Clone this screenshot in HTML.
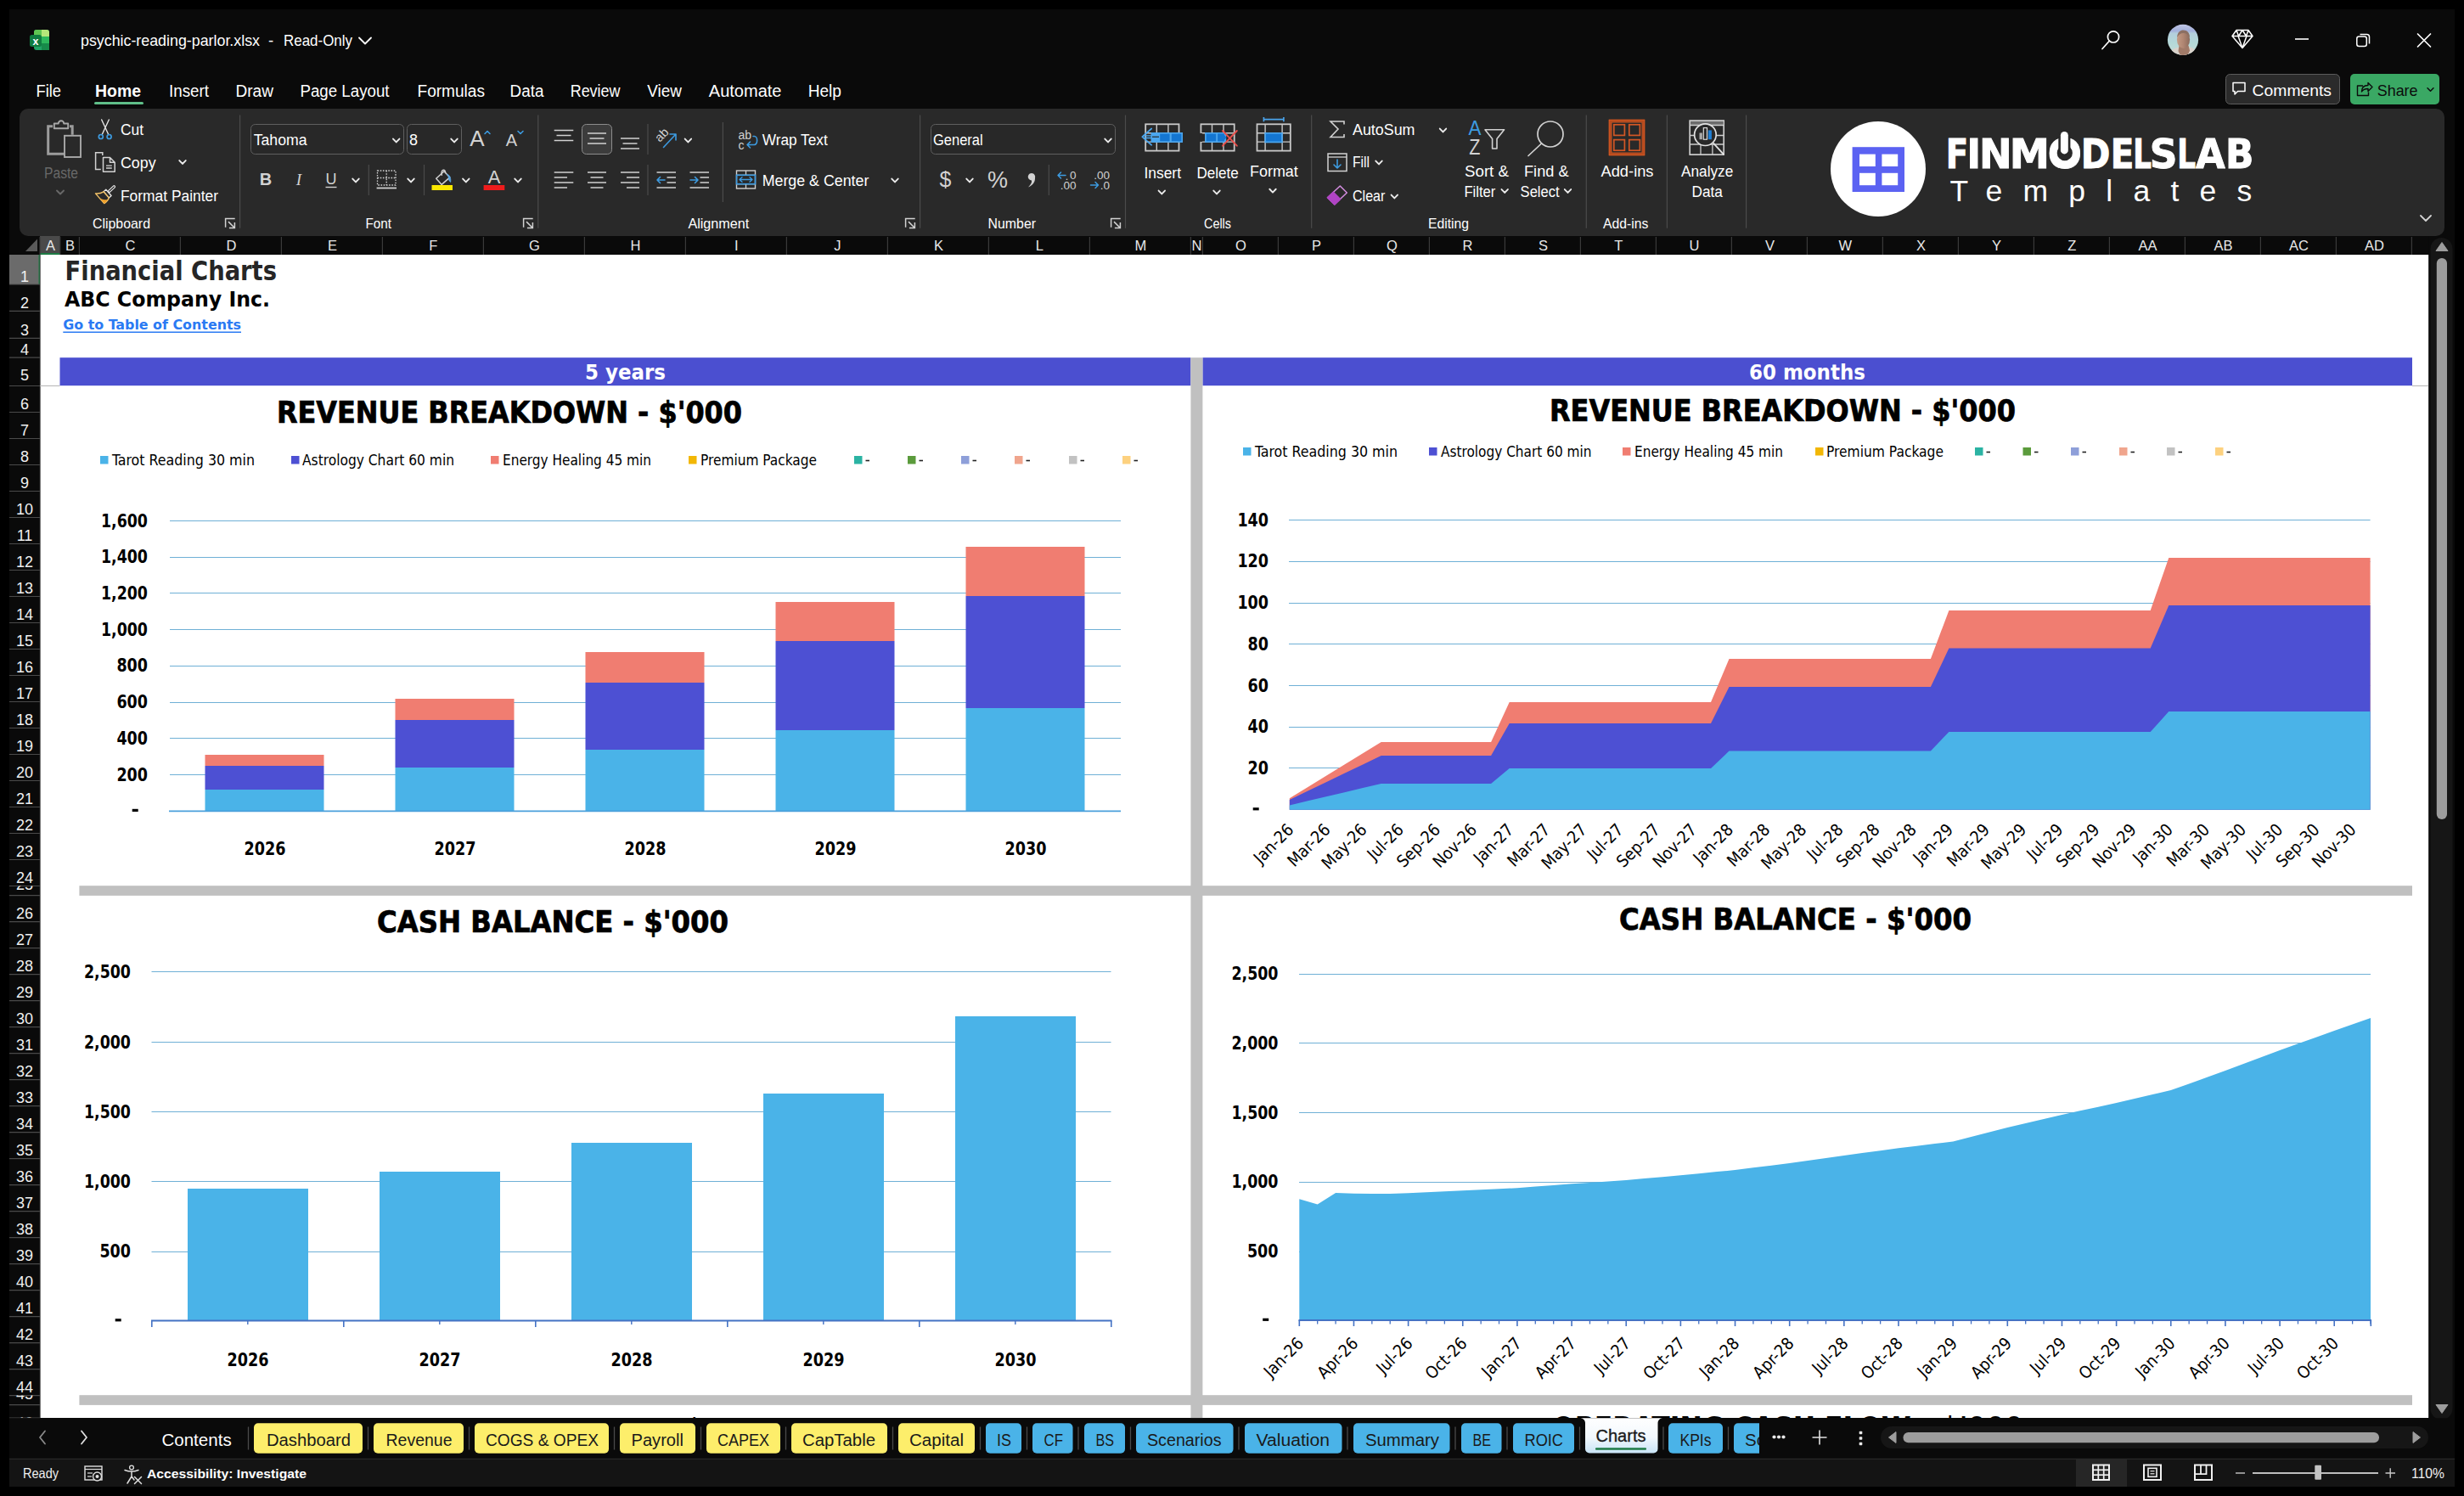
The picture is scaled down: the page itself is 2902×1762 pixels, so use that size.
<!DOCTYPE html>
<html lang="en"><head><meta charset="utf-8"><title>psychic-reading-parlor.xlsx - Excel</title>
<style>html,body{margin:0;padding:0;background:#000;}body{width:2902px;height:1762px;overflow:hidden;}svg text{white-space:pre;}</style>
</head><body>
<svg width="2902" height="1762" viewBox="0 0 2902 1762" style="display:block" role="img" aria-label="Excel workbook psychic-reading-parlor.xlsx - Financial Charts">
<rect x="0" y="0" width="2902" height="1762" fill="#000" />
<rect x="11" y="11" width="2880" height="1740" fill="#0a0a0a" />
<g>
<rect x="40" y="35" width="18" height="24" fill="#21a366" rx="3" />
<path d="M49 35 h6 a3 3 0 0 1 3 3 v5 h-9z" fill="#b5e67a" />
<path d="M40 38 a3 3 0 0 1 3 -3 h6 v8 h-9z" fill="#5fc552" />
<rect x="49" y="43" width="9" height="8" fill="#2eb85c" />
<rect x="49" y="51" width="9" height="8" fill="#178a4a" />
<rect x="35" y="41" width="14" height="14" fill="#107c41" rx="2.5" />
<text x="42" y="52.5" font-size="12.5" fill="#fff" font-family="'Liberation Sans', sans-serif" font-weight="bold" text-anchor="middle" >x</text>
</g>
<text x="95" y="54" font-size="18.5" fill="#ffffff" font-family="'Liberation Sans', sans-serif" textLength="211" lengthAdjust="spacingAndGlyphs" >psychic-reading-parlor.xlsx</text>
<text x="319" y="54" font-size="18.5" fill="#ffffff" font-family="'Liberation Sans', sans-serif" text-anchor="middle" >-</text>
<text x="334" y="54" font-size="18.5" fill="#ffffff" font-family="'Liberation Sans', sans-serif" textLength="81" lengthAdjust="spacingAndGlyphs" >Read-Only</text>
<path d="M423 44.5 L430 51.5 L437 44.5" fill="none" stroke="#fff" stroke-width="1.8" stroke-linecap="round" stroke-linejoin="round"/>
<circle cx="2489" cy="43.4" r="6.6" fill="none" stroke="#fff" stroke-width="1.7"/>
<line x1="2484.3" y1="48.3" x2="2476" y2="57.5" stroke="#fff" stroke-width="1.7" stroke-linecap="round"/>
<defs><clipPath id="av"><circle cx="2571" cy="46.900" r="18.100"/></clipPath><linearGradient id="avg" x1="0" y1="0" x2="0" y2="1"><stop offset="0" stop-color="#c3c8e6"/><stop offset="0.22" stop-color="#a4b1dc"/><stop offset="0.3" stop-color="#b3cfdc"/><stop offset="0.6" stop-color="#b4d9d8"/><stop offset="1" stop-color="#c9dcd8"/></linearGradient><linearGradient id="face" x1="0" y1="0" x2="1" y2="0"><stop offset="0" stop-color="#c39a85"/><stop offset="0.5" stop-color="#b08672"/><stop offset="1" stop-color="#8a6a5c"/></linearGradient></defs>
<g clip-path="url(#av)">
<rect x="2552" y="28" width="38" height="38" fill="url(#avg)" />
<path d="M2552 70 L2554.500 62 C2557.500 58.500 2562 56.500 2566 55.500 L2577 54.500 C2582 56 2586.500 58.500 2589 63 L2590 70 Z" fill="#d9d2cb" />
<path d="M2566.500 54 l-1 6 c1.500 4 3 5.500 5 6.500 l3 0 c2.500 -1.500 4.500 -3.500 5.500 -7 l-1.500 -6z" fill="#a17a68" />
<ellipse cx="2571.500" cy="46.500" rx="7.600" ry="10.600" fill="url(#face)"/>
<path d="M2564.200 44 c0 -6 3.500 -8.600 7.300 -8.600 c4.500 0 7.500 3 7.500 8.600 c-2 -3.500 -4.500 -5 -7.500 -5 c-3 0 -5.500 1.500 -7.300 5z" fill="#8c6f63" />
</g>
<path d="M2634 35.5 h14 l5 7 l-12 14 l-12 -14z M2629 42.5 h24 M2636 42.5 l5 14 l5 -14 M2634 35.5 l2.500 7 l4.5 -7 l4.5 7 l2.500 -7" fill="none" stroke="#fff" stroke-width="1.5" stroke-linejoin="round"/>
<line x1="2703" y1="46" x2="2719" y2="46" stroke="#fff" stroke-width="1.6" />
<rect x="2775.8" y="43" width="11.5" height="11.5" fill="none" rx="2.5" stroke="#fff" stroke-width="1.5" />
<path d="M2779.5 40.5 h8 a3 3 0 0 1 3 3 v8" fill="none" stroke="#fff" stroke-width="1.5" />
<path d="M2847.500 40 l15 15 M2862.500 40 l-15 15" fill="none" stroke="#fff" stroke-width="1.7" stroke-linecap="round"/>
<text x="42.5" y="114" font-size="19.5" fill="#ffffff" font-family="'Liberation Sans', sans-serif" textLength="29.5" lengthAdjust="spacingAndGlyphs" >File</text>
<text x="112" y="114" font-size="19.5" fill="#ffffff" font-family="'Liberation Sans', sans-serif" font-weight="bold" textLength="54" lengthAdjust="spacingAndGlyphs" >Home</text>
<text x="199" y="114" font-size="19.5" fill="#ffffff" font-family="'Liberation Sans', sans-serif" textLength="47" lengthAdjust="spacingAndGlyphs" >Insert</text>
<text x="277.5" y="114" font-size="19.5" fill="#ffffff" font-family="'Liberation Sans', sans-serif" textLength="44.5" lengthAdjust="spacingAndGlyphs" >Draw</text>
<text x="353.5" y="114" font-size="19.5" fill="#ffffff" font-family="'Liberation Sans', sans-serif" textLength="105" lengthAdjust="spacingAndGlyphs" >Page Layout</text>
<text x="491.5" y="114" font-size="19.5" fill="#ffffff" font-family="'Liberation Sans', sans-serif" textLength="79.5" lengthAdjust="spacingAndGlyphs" >Formulas</text>
<text x="600.6" y="114" font-size="19.5" fill="#ffffff" font-family="'Liberation Sans', sans-serif" textLength="39.8" lengthAdjust="spacingAndGlyphs" >Data</text>
<text x="671.7" y="114" font-size="19.5" fill="#ffffff" font-family="'Liberation Sans', sans-serif" textLength="58.8" lengthAdjust="spacingAndGlyphs" >Review</text>
<text x="762.2" y="114" font-size="19.5" fill="#ffffff" font-family="'Liberation Sans', sans-serif" textLength="40.6" lengthAdjust="spacingAndGlyphs" >View</text>
<text x="834.8" y="114" font-size="19.5" fill="#ffffff" font-family="'Liberation Sans', sans-serif" textLength="85.7" lengthAdjust="spacingAndGlyphs" >Automate</text>
<text x="951.7" y="114" font-size="19.5" fill="#ffffff" font-family="'Liberation Sans', sans-serif" textLength="39.3" lengthAdjust="spacingAndGlyphs" >Help</text>
<rect x="111" y="120" width="58" height="3" fill="#5fbe88" rx="1.5" />
<rect x="2621.5" y="87.5" width="134" height="35" fill="#2b2b2b" rx="5" stroke="#5c5c5c" stroke-width="1" />
<path d="M2630 97.500 h14 v10 h-8.500 l-3.500 3.500 v-3.500 h-2z" fill="none" stroke="#fff" stroke-width="1.5" stroke-linejoin="round"/>
<text x="2652.6" y="112.5" font-size="18.5" fill="#ffffff" font-family="'Liberation Sans', sans-serif" textLength="93.4" lengthAdjust="spacingAndGlyphs" >Comments</text>
<rect x="2768" y="87" width="105" height="36" fill="#3aa864" rx="5" />
<path d="M2783 101 h-6.500 v11.500 h13 v-4 M2781.500 108 c0 -5 3 -7.500 7.500 -7.500 v-3 l5 5 l-5 5 v-3 c-3.500 0 -6 1 -7.500 3.500z" fill="none" stroke="#0c0c0c" stroke-width="1.4" stroke-linejoin="round"/>
<text x="2799.7" y="112.5" font-size="18.5" fill="#0c0c0c" font-family="'Liberation Sans', sans-serif" textLength="47.9" lengthAdjust="spacingAndGlyphs" >Share</text>
<path d="M2859 103.75 L2862.5 107.25 L2866 103.75" fill="none" stroke="#0c0c0c" stroke-width="1.5" stroke-linecap="round" stroke-linejoin="round"/>
<rect x="23" y="128" width="2856" height="150" fill="#292929" rx="10" />
<path d="M62 148.700 h-5.300 v32.600 h19" fill="none" stroke="#9c9c9c" stroke-width="3" stroke-linejoin="miter"/>
<path d="M82 148.700 h3.200 v10" fill="none" stroke="#9c9c9c" stroke-width="3" />
<path d="M63.800 151.300 v-5.800 h5 a3.200 3.200 0 0 1 6.400 0 h5 v5.800z" fill="#292929" stroke="#a8a8a8" stroke-width="1.9" stroke-linejoin="round"/>
<rect x="76" y="159.8" width="19" height="25.2" fill="#292929" stroke="#a8a8a8" stroke-width="1.9" />
<text x="52" y="209.6" font-size="18" fill="#686868" font-family="'Liberation Sans', sans-serif" textLength="40" lengthAdjust="spacingAndGlyphs" >Paste</text>
<path d="M67 224.5 L71 228.5 L75 224.5" fill="none" stroke="#686868" stroke-width="1.9" stroke-linecap="round" stroke-linejoin="round"/>
<path d="M119.700 141 L127.800 158.500 M128.300 141 L120.200 158.500" fill="none" stroke="#e4e4e4" stroke-width="1.4" stroke-linecap="round"/>
<circle cx="118.800" cy="161" r="2.500" fill="none" stroke="#3d9be0" stroke-width="1.700"/><circle cx="128.600" cy="161" r="2.500" fill="none" stroke="#3d9be0" stroke-width="1.700"/>
<text x="142" y="159" font-size="18" fill="#fff" font-family="'Liberation Sans', sans-serif" textLength="27" lengthAdjust="spacingAndGlyphs" >Cut</text>
<path d="M120.800 183 v-3.200 h-8.200 v19.800 h6.200" fill="none" stroke="#d2d2d2" stroke-width="1.5" />
<path d="M121.500 185.500 h8 l5.700 5.700 v11 h-13.700z M129.500 185.500 v5.700 h5.700" fill="none" stroke="#d2d2d2" stroke-width="1.5" stroke-linejoin="round"/>
<path d="M125 195.200 h6.800 M125 198 h6.800" fill="none" stroke="#d2d2d2" stroke-width="1.3" />
<text x="142" y="198" font-size="18" fill="#fff" font-family="'Liberation Sans', sans-serif" textLength="41.6" lengthAdjust="spacingAndGlyphs" >Copy</text>
<path d="M211.3 189.05 L215 192.95 L218.7 189.05" fill="none" stroke="#ececec" stroke-width="1.9" stroke-linecap="round" stroke-linejoin="round"/>
<path d="M134.300 220 l-5.600 5.200" fill="none" stroke="#e8e8e8" stroke-width="3.6" stroke-linecap="round"/>
<path d="M134.300 220 l-5.600 5.200" fill="none" stroke="#292929" stroke-width="1.2" stroke-linecap="round"/>
<path d="M124.800 223.300 l6.300 7.200 l-2.800 2.500 l-6.300 -7.200z" fill="#292929" stroke="#e8e8e8" stroke-width="1.3" stroke-linejoin="round"/>
<path d="M122 225.800 l6.300 7.200 c-1 3 -3 5 -5.600 6.600 l-10.200 -11.700 c3.500 0.200 7 -0.500 9.500 -2.100z" fill="#292929" stroke="#f4c368" stroke-width="1.4" stroke-linejoin="round"/>
<path d="M117 232.900 c2.500 1.800 6 2.600 9.800 2.300 c-0.900 1.700 -2.300 3.100 -4.100 4.400z" fill="#f0a22c" />
<text x="142" y="236.9" font-size="18" fill="#fff" font-family="'Liberation Sans', sans-serif" textLength="115" lengthAdjust="spacingAndGlyphs" >Format Painter</text>
<text x="109" y="268.6" font-size="17" fill="#fff" font-family="'Liberation Sans', sans-serif" textLength="68" lengthAdjust="spacingAndGlyphs" >Clipboard</text>
<path d="M276.7 257.5 H265.6 V267.8" fill="none" stroke="#d2d2d2" stroke-width="1.5" />
<path d="M269 261.1 L276.2 268.3 M276.4 262.1 V268.6 H269.9" fill="none" stroke="#d2d2d2" stroke-width="1.5" />
<line x1="282.6" y1="135.6" x2="282.6" y2="268.8" stroke="#4b4b4b" stroke-width="1.2" />
<rect x="295.5" y="146.5" width="180" height="35" fill="#282828" rx="5" stroke="#5f5f5f" stroke-width="1" />
<text x="298.7" y="170.6" font-size="18" fill="#fff" font-family="'Liberation Sans', sans-serif" textLength="62.8" lengthAdjust="spacingAndGlyphs" >Tahoma</text>
<path d="M463 163.55 L466.7 167.45 L470.4 163.55" fill="none" stroke="#ececec" stroke-width="1.9" stroke-linecap="round" stroke-linejoin="round"/>
<rect x="479.5" y="146.5" width="64" height="35" fill="#282828" rx="5" stroke="#5f5f5f" stroke-width="1" />
<text x="482" y="170.6" font-size="18" fill="#fff" font-family="'Liberation Sans', sans-serif" >8</text>
<path d="M531.3 163.55 L535 167.45 L538.7 163.55" fill="none" stroke="#ececec" stroke-width="1.9" stroke-linecap="round" stroke-linejoin="round"/>
<text x="562" y="172" font-size="26" fill="#d2d2d2" font-family="'Liberation Sans', sans-serif" text-anchor="middle" >A</text>
<path d="M571 157.500 l3 -3 l3 3" fill="none" stroke="#3d9be0" stroke-width="1.6" stroke-linecap="round" stroke-linejoin="round"/>
<text x="602.5" y="171.8" font-size="20" fill="#d2d2d2" font-family="'Liberation Sans', sans-serif" text-anchor="middle" >A</text>
<path d="M610 154.500 l3 3 l3 -3" fill="none" stroke="#3d9be0" stroke-width="1.6" stroke-linecap="round" stroke-linejoin="round"/>
<text x="313" y="217.6" font-size="20" fill="#d2d2d2" font-family="'Liberation Sans', sans-serif" font-weight="bold" text-anchor="middle" >B</text>
<text x="352" y="217.6" font-size="19" fill="#d2d2d2" font-family="'Liberation Serif', serif" text-anchor="middle" style="font-style:italic" >I</text>
<text x="390" y="216.5" font-size="18" fill="#d2d2d2" font-family="'Liberation Sans', sans-serif" text-anchor="middle" >U</text>
<line x1="383.5" y1="220.5" x2="396.5" y2="220.5" stroke="#d2d2d2" stroke-width="1.4" />
<path d="M415.3 210.55 L419 214.45 L422.7 210.55" fill="none" stroke="#ececec" stroke-width="1.9" stroke-linecap="round" stroke-linejoin="round"/>
<line x1="434.3" y1="194" x2="434.3" y2="230" stroke="#4b4b4b" stroke-width="1.2" />
<rect x="444.500" y="201" width="21.500" height="17" fill="none" stroke="#d2d2d2" stroke-width="1.3" stroke-dasharray="1.600 1.600"/>
<line x1="455.2" y1="201" x2="455.2" y2="218" stroke="#d2d2d2" stroke-width="1.3" stroke-dasharray="1.600 1.600"/>
<line x1="444.5" y1="209.5" x2="466" y2="209.5" stroke="#d2d2d2" stroke-width="1.3" stroke-dasharray="1.600 1.600"/>
<line x1="443.6" y1="221.5" x2="467" y2="221.5" stroke="#d2d2d2" stroke-width="1.8" />
<path d="M480.3 210.55 L484 214.45 L487.7 210.55" fill="none" stroke="#ececec" stroke-width="1.9" stroke-linecap="round" stroke-linejoin="round"/>
<line x1="499.5" y1="194" x2="499.5" y2="230" stroke="#4b4b4b" stroke-width="1.2" />
<path d="M513.700 210.300 l9.300 -8.500 l6.800 7.100 l-9.600 8.500z" fill="none" stroke="#d2d2d2" stroke-width="1.5" stroke-linejoin="round"/>
<path d="M520.300 206.300 c-0.800 -3 0 -5.600 1.800 -6 c1.700 -0.300 2.600 1.200 2.500 3.300" fill="none" stroke="#d2d2d2" stroke-width="1.4" stroke-linecap="round"/>
<path d="M526.400 205.200 c3.200 0.800 4.800 4 4.300 9.300 c-1.600 -1.200 -2.300 -2.600 -2.300 -4.300 c0 -2 -0.600 -3.600 -2 -5z" fill="#5aa9e6" stroke="#5aa9e6" stroke-width="0.8" />
<rect x="508.5" y="218" width="24.5" height="6" fill="#fbe800" />
<path d="M545.1 210.55 L548.8 214.45 L552.5 210.55" fill="none" stroke="#ececec" stroke-width="1.9" stroke-linecap="round" stroke-linejoin="round"/>
<text x="582" y="215.5" font-size="22" fill="#d2d2d2" font-family="'Liberation Sans', sans-serif" text-anchor="middle" >A</text>
<rect x="569.6" y="218" width="24.7" height="6" fill="#ee1c1c" />
<path d="M606.3 210.55 L610 214.45 L613.7 210.55" fill="none" stroke="#ececec" stroke-width="1.9" stroke-linecap="round" stroke-linejoin="round"/>
<text x="430.4" y="268.6" font-size="17" fill="#fff" font-family="'Liberation Sans', sans-serif" textLength="30.6" lengthAdjust="spacingAndGlyphs" >Font</text>
<path d="M627.7 257.5 H616.6 V267.8" fill="none" stroke="#d2d2d2" stroke-width="1.5" />
<path d="M620 261.1 L627.2 268.3 M627.4 262.1 V268.6 H620.9" fill="none" stroke="#d2d2d2" stroke-width="1.5" />
<line x1="633.8" y1="135.6" x2="633.8" y2="268.8" stroke="#4b4b4b" stroke-width="1.2" />
<line x1="652.7" y1="153.5" x2="675.3" y2="153.5" stroke="#d2d2d2" stroke-width="1.5" />
<line x1="652.7" y1="165.5" x2="675.3" y2="165.5" stroke="#d2d2d2" stroke-width="1.5" />
<line x1="655.5" y1="159.5" x2="672.5" y2="159.5" stroke="#d2d2d2" stroke-width="1.5" />
<rect x="685.5" y="146.5" width="35" height="35" fill="#3c3c3c" rx="5" stroke="#8c8c8c" stroke-width="1" />
<line x1="692" y1="157" x2="714" y2="157" stroke="#d2d2d2" stroke-width="1.5" />
<line x1="692" y1="169" x2="714" y2="169" stroke="#d2d2d2" stroke-width="1.5" />
<line x1="694.5" y1="163" x2="711.5" y2="163" stroke="#d2d2d2" stroke-width="1.5" />
<line x1="731" y1="163" x2="753" y2="163" stroke="#d2d2d2" stroke-width="1.5" />
<line x1="731" y1="175" x2="753" y2="175" stroke="#d2d2d2" stroke-width="1.5" />
<line x1="733.5" y1="169" x2="750.5" y2="169" stroke="#d2d2d2" stroke-width="1.5" />
<line x1="763" y1="146" x2="763" y2="182" stroke="#4b4b4b" stroke-width="1.2" />
<text x="0" y="0" font-size="14.500" fill="#d2d2d2" font-family="'Liberation Sans', sans-serif" transform="translate(777,168) rotate(-45)">ab</text>
<path d="M781.500 173.500 L795.500 158.500 M789 158 h7 v7" fill="none" stroke="#3d9be0" stroke-width="1.6" stroke-linecap="round" stroke-linejoin="round"/>
<path d="M806.7 163.55 L810.4 167.45 L814.1 163.55" fill="none" stroke="#ececec" stroke-width="1.9" stroke-linecap="round" stroke-linejoin="round"/>
<line x1="652.7" y1="203" x2="675.3" y2="203" stroke="#d2d2d2" stroke-width="1.5" />
<line x1="652.7" y1="215" x2="675.3" y2="215" stroke="#d2d2d2" stroke-width="1.5" />
<line x1="652.7" y1="209" x2="668" y2="209" stroke="#d2d2d2" stroke-width="1.5" />
<line x1="652.7" y1="221" x2="668" y2="221" stroke="#d2d2d2" stroke-width="1.5" />
<line x1="692" y1="203" x2="714" y2="203" stroke="#d2d2d2" stroke-width="1.5" />
<line x1="692" y1="215" x2="714" y2="215" stroke="#d2d2d2" stroke-width="1.5" />
<line x1="695.5" y1="209" x2="710.5" y2="209" stroke="#d2d2d2" stroke-width="1.5" />
<line x1="695.5" y1="221" x2="710.5" y2="221" stroke="#d2d2d2" stroke-width="1.5" />
<line x1="731" y1="203" x2="753" y2="203" stroke="#d2d2d2" stroke-width="1.5" />
<line x1="731" y1="215" x2="753" y2="215" stroke="#d2d2d2" stroke-width="1.5" />
<line x1="738" y1="209" x2="753" y2="209" stroke="#d2d2d2" stroke-width="1.5" />
<line x1="738" y1="221" x2="753" y2="221" stroke="#d2d2d2" stroke-width="1.5" />
<line x1="763" y1="194" x2="763" y2="230" stroke="#4b4b4b" stroke-width="1.2" />
<line x1="773.5" y1="203" x2="796" y2="203" stroke="#d2d2d2" stroke-width="1.5" />
<line x1="773.5" y1="221" x2="796" y2="221" stroke="#d2d2d2" stroke-width="1.5" />
<line x1="785.5" y1="209" x2="796" y2="209" stroke="#d2d2d2" stroke-width="1.5" />
<line x1="785.5" y1="215" x2="796" y2="215" stroke="#d2d2d2" stroke-width="1.5" />
<path d="M783 212 h-9 M777.500 208.500 l-3.500 3.500 l3.500 3.500" fill="none" stroke="#3d9be0" stroke-width="1.6" stroke-linecap="round" stroke-linejoin="round"/>
<line x1="812.5" y1="203" x2="835" y2="203" stroke="#d2d2d2" stroke-width="1.5" />
<line x1="812.5" y1="221" x2="835" y2="221" stroke="#d2d2d2" stroke-width="1.5" />
<line x1="824.5" y1="209" x2="835" y2="209" stroke="#d2d2d2" stroke-width="1.5" />
<line x1="824.5" y1="215" x2="835" y2="215" stroke="#d2d2d2" stroke-width="1.5" />
<path d="M813 212 h9 M818.500 208.500 l3.500 3.500 l-3.500 3.500" fill="none" stroke="#3d9be0" stroke-width="1.6" stroke-linecap="round" stroke-linejoin="round"/>
<line x1="851.4" y1="144" x2="851.4" y2="238" stroke="#4b4b4b" stroke-width="1.2" />
<text x="869.5" y="164" font-size="14" fill="#d2d2d2" font-family="'Liberation Sans', sans-serif" >ab</text>
<text x="869.5" y="176" font-size="14" fill="#d2d2d2" font-family="'Liberation Sans', sans-serif" >c</text>
<path d="M887 160.500 h1.500 a2.500 4 0 0 1 0 10 h-8.500 M883.500 167 l-3.500 3.500 l3.500 3.500" fill="none" stroke="#3d9be0" stroke-width="1.6" stroke-linecap="round" stroke-linejoin="round"/>
<text x="897.7" y="170.6" font-size="18" fill="#fff" font-family="'Liberation Sans', sans-serif" textLength="77.1" lengthAdjust="spacingAndGlyphs" >Wrap Text</text>
<rect x="867.5" y="201" width="22" height="21" fill="none" stroke="#d2d2d2" stroke-width="1.4" />
<line x1="867.5" y1="206.3" x2="889.5" y2="206.3" stroke="#d2d2d2" stroke-width="1.3" />
<line x1="867.5" y1="216.7" x2="889.5" y2="216.7" stroke="#d2d2d2" stroke-width="1.3" />
<line x1="878.5" y1="201" x2="878.5" y2="206.3" stroke="#d2d2d2" stroke-width="1.3" />
<line x1="878.5" y1="216.7" x2="878.5" y2="222" stroke="#d2d2d2" stroke-width="1.3" />
<rect x="867.5" y="206.3" width="22" height="10.4" fill="none" stroke="#3d9be0" stroke-width="1.6" />
<path d="M871 211.500 h15 M874 208.800 l-3 2.700 l3 2.700 M883 208.800 l3 2.700 l-3 2.700" fill="none" stroke="#3d9be0" stroke-width="1.4" stroke-linecap="round" stroke-linejoin="round"/>
<text x="897.7" y="218.7" font-size="18" fill="#fff" font-family="'Liberation Sans', sans-serif" textLength="125.7" lengthAdjust="spacingAndGlyphs" >Merge &amp; Center</text>
<path d="M1050.3 210.55 L1054 214.45 L1057.7 210.55" fill="none" stroke="#ececec" stroke-width="1.9" stroke-linecap="round" stroke-linejoin="round"/>
<text x="810.4" y="268.6" font-size="17" fill="#fff" font-family="'Liberation Sans', sans-serif" textLength="71.9" lengthAdjust="spacingAndGlyphs" >Alignment</text>
<path d="M1077.7 257.5 H1066.6 V267.8" fill="none" stroke="#d2d2d2" stroke-width="1.5" />
<path d="M1070 261.1 L1077.2 268.3 M1077.4 262.1 V268.6 H1070.9" fill="none" stroke="#d2d2d2" stroke-width="1.5" />
<line x1="1083.6" y1="135.6" x2="1083.6" y2="268.8" stroke="#4b4b4b" stroke-width="1.2" />
<rect x="1096.5" y="146.5" width="217" height="35" fill="#282828" rx="5" stroke="#5f5f5f" stroke-width="1" />
<text x="1099" y="170.6" font-size="18" fill="#fff" font-family="'Liberation Sans', sans-serif" textLength="58.7" lengthAdjust="spacingAndGlyphs" >General</text>
<path d="M1301.3 163.55 L1305 167.45 L1308.7 163.55" fill="none" stroke="#ececec" stroke-width="1.9" stroke-linecap="round" stroke-linejoin="round"/>
<text x="1113.5" y="220" font-size="25" fill="#d2d2d2" font-family="'Liberation Sans', sans-serif" text-anchor="middle" >$</text>
<path d="M1138.3 210.55 L1142 214.45 L1145.7 210.55" fill="none" stroke="#ececec" stroke-width="1.9" stroke-linecap="round" stroke-linejoin="round"/>
<text x="1175" y="220.5" font-size="27" fill="#d2d2d2" font-family="'Liberation Sans', sans-serif" text-anchor="middle" >%</text>
<path d="M1215 204 a4.200 4.200 0 1 1 -0.100 0z M1219 208 c0.500 6 -2 10 -8 12.500 c3 -3 4.500 -5.500 4 -8z" fill="#d2d2d2" />
<line x1="1235.3" y1="194" x2="1235.3" y2="230" stroke="#4b4b4b" stroke-width="1.2" />
<path d="M1255 206.500 h-9 M1249.500 203 l-3.500 3.500 l3.500 3.500" fill="none" stroke="#3d9be0" stroke-width="1.5" stroke-linecap="round" stroke-linejoin="round"/>
<text x="1267.5" y="211" font-size="13.5" fill="#d2d2d2" font-family="'Liberation Sans', sans-serif" text-anchor="end" >0</text>
<text x="1267.5" y="222.5" font-size="13.5" fill="#d2d2d2" font-family="'Liberation Sans', sans-serif" text-anchor="end" >.00</text>
<text x="1256.5" y="211.5" font-size="12.5" fill="#d2d2d2" font-family="'Liberation Sans', sans-serif" text-anchor="middle" >.</text>
<text x="1307" y="211" font-size="13.5" fill="#d2d2d2" font-family="'Liberation Sans', sans-serif" text-anchor="end" >.00</text>
<text x="1307" y="222.5" font-size="13.5" fill="#d2d2d2" font-family="'Liberation Sans', sans-serif" text-anchor="end" >.0</text>
<path d="M1284.500 218 h9 M1290 214.500 l3.500 3.500 l-3.500 3.500" fill="none" stroke="#3d9be0" stroke-width="1.5" stroke-linecap="round" stroke-linejoin="round"/>
<text x="1163.6" y="268.6" font-size="17" fill="#fff" font-family="'Liberation Sans', sans-serif" textLength="56.4" lengthAdjust="spacingAndGlyphs" >Number</text>
<path d="M1319.7 257.5 H1308.6 V267.8" fill="none" stroke="#d2d2d2" stroke-width="1.5" />
<path d="M1312 261.1 L1319.2 268.3 M1319.4 262.1 V268.6 H1312.9" fill="none" stroke="#d2d2d2" stroke-width="1.5" />
<line x1="1325.5" y1="135.6" x2="1325.5" y2="268.8" stroke="#4b4b4b" stroke-width="1.2" />
<rect x="1349.2" y="146.3" width="39.3" height="31.3" fill="none" stroke="#c9c9c9" stroke-width="1.8" />
<line x1="1362.3" y1="146.3" x2="1362.3" y2="177.6" stroke="#c9c9c9" stroke-width="1.4" />
<line x1="1375.9" y1="146.3" x2="1375.9" y2="177.6" stroke="#c9c9c9" stroke-width="1.4" />
<line x1="1349.2" y1="156.733" x2="1388.5" y2="156.733" stroke="#c9c9c9" stroke-width="1.4" />
<line x1="1349.2" y1="167.167" x2="1388.5" y2="167.167" stroke="#c9c9c9" stroke-width="1.4" />
<rect x="1355.5" y="156" width="37.5" height="11.9" fill="#4ba6ee" />
<rect x="1366.2" y="157.6" width="11.4" height="8.7" fill="#1476d2" />
<rect x="1379.8" y="157.6" width="11.6" height="8.7" fill="#1476d2" />
<path d="M1356.200 151.500 L1345.300 161.200 L1356.200 170.800" fill="none" stroke="#4ba6ee" stroke-width="1.7" stroke-linecap="round" stroke-linejoin="round"/>
<path d="M1346.500 159.900 H1365 M1346.500 162.500 H1365" fill="none" stroke="#4ba6ee" stroke-width="1.3" />
<rect x="1357" y="160.6" width="8" height="1.2" fill="#292929" />
<text x="1347.5" y="209.6" font-size="18" fill="#fff" font-family="'Liberation Sans', sans-serif" textLength="43.5" lengthAdjust="spacingAndGlyphs" >Insert</text>
<path d="M1364.6 224.55 L1368.3 228.45 L1372 224.55" fill="none" stroke="#ececec" stroke-width="1.9" stroke-linecap="round" stroke-linejoin="round"/>
<rect x="1414.4" y="146.3" width="39.3" height="31.3" fill="none" stroke="#c9c9c9" stroke-width="1.8" />
<line x1="1427.5" y1="146.3" x2="1427.5" y2="177.6" stroke="#c9c9c9" stroke-width="1.4" />
<line x1="1441" y1="146.3" x2="1441" y2="177.6" stroke="#c9c9c9" stroke-width="1.4" />
<line x1="1414.4" y1="156.733" x2="1453.7" y2="156.733" stroke="#c9c9c9" stroke-width="1.4" />
<line x1="1414.4" y1="167.167" x2="1453.7" y2="167.167" stroke="#c9c9c9" stroke-width="1.4" />
<rect x="1412.5" y="156.9" width="3.6" height="10" fill="#292929" />
<rect x="1419" y="156" width="25.2" height="11.9" fill="#4ba6ee" />
<rect x="1420.7" y="157.6" width="11.5" height="8.7" fill="#1476d2" />
<rect x="1434.3" y="157.6" width="7.5" height="8.7" fill="#1476d2" />
<path d="M1434.300 157.600 h6.500 l3.600 4.300 l-3.600 4.400 h-6.500z" fill="#1476d2" />
<path d="M1440 154 L1456.800 171.700 M1456.800 154 L1440 171.700" fill="none" stroke="#e8504c" stroke-width="1.9" stroke-linecap="round"/>
<text x="1409.4" y="209.6" font-size="18" fill="#fff" font-family="'Liberation Sans', sans-serif" textLength="49.3" lengthAdjust="spacingAndGlyphs" >Delete</text>
<path d="M1429.3 224.55 L1433 228.45 L1436.7 224.55" fill="none" stroke="#ececec" stroke-width="1.9" stroke-linecap="round" stroke-linejoin="round"/>
<rect x="1480.5" y="146.3" width="39.3" height="31.3" fill="none" stroke="#c9c9c9" stroke-width="1.8" />
<line x1="1490.1" y1="146.3" x2="1490.1" y2="177.6" stroke="#c9c9c9" stroke-width="1.4" />
<line x1="1510.1" y1="146.3" x2="1510.1" y2="177.6" stroke="#c9c9c9" stroke-width="1.4" />
<line x1="1480.5" y1="156.733" x2="1519.8" y2="156.733" stroke="#c9c9c9" stroke-width="1.4" />
<line x1="1480.5" y1="167.167" x2="1519.8" y2="167.167" stroke="#c9c9c9" stroke-width="1.4" />
<rect x="1489.3" y="156" width="21.5" height="12.3" fill="#4ba6ee" />
<rect x="1491" y="157.6" width="18" height="9" fill="#1476d2" />
<path d="M1488.400 140.650 H1511.900 M1488.400 138.100 V143.200 M1511.900 138.100 V143.200" fill="none" stroke="#4ba6ee" stroke-width="1.6" />
<text x="1472" y="207.8" font-size="18" fill="#fff" font-family="'Liberation Sans', sans-serif" textLength="56.8" lengthAdjust="spacingAndGlyphs" >Format</text>
<path d="M1495.3 222.75 L1499 226.65 L1502.7 222.75" fill="none" stroke="#ececec" stroke-width="1.9" stroke-linecap="round" stroke-linejoin="round"/>
<text x="1418" y="268.6" font-size="17" fill="#fff" font-family="'Liberation Sans', sans-serif" textLength="32" lengthAdjust="spacingAndGlyphs" >Cells</text>
<line x1="1544.7" y1="135.6" x2="1544.7" y2="268.8" stroke="#4b4b4b" stroke-width="1.2" />
<path d="M1583 146.500 v-3.500 h-16 l9 9 l-9 9.500 h16 v-3.500" fill="none" stroke="#d2d2d2" stroke-width="1.6" stroke-linejoin="miter"/>
<text x="1593" y="159" font-size="18" fill="#fff" font-family="'Liberation Sans', sans-serif" textLength="73.5" lengthAdjust="spacingAndGlyphs" >AutoSum</text>
<path d="M1695.8 151.55 L1699.5 155.45 L1703.2 151.55" fill="none" stroke="#ececec" stroke-width="1.9" stroke-linecap="round" stroke-linejoin="round"/>
<rect x="1564" y="181" width="22" height="20.5" fill="none" stroke="#d2d2d2" stroke-width="1.5" />
<line x1="1564" y1="185" x2="1586" y2="185" stroke="#d2d2d2" stroke-width="1.3" />
<path d="M1575 188 v9.500 M1571 194 l4 4 l4 -4" fill="none" stroke="#3d9be0" stroke-width="1.6" stroke-linecap="round" stroke-linejoin="round"/>
<text x="1593" y="197" font-size="18" fill="#fff" font-family="'Liberation Sans', sans-serif" textLength="20" lengthAdjust="spacingAndGlyphs" >Fill</text>
<path d="M1620.3 189.55 L1624 193.45 L1627.7 189.55" fill="none" stroke="#ececec" stroke-width="1.9" stroke-linecap="round" stroke-linejoin="round"/>
<path d="M1563.500 232.700 l14.800 -13.700 l8 8 l-14.500 13.700z" fill="none" stroke="#d48de0" stroke-width="1.5" stroke-linejoin="round"/>
<path d="M1563.500 232.700 l6.800 -6.300 l8.200 8.200 l-6.700 6.300z" fill="#b044c4" stroke="#b044c4" stroke-width="1.5" stroke-linejoin="round"/>
<text x="1593" y="236.9" font-size="18" fill="#fff" font-family="'Liberation Sans', sans-serif" textLength="38.4" lengthAdjust="spacingAndGlyphs" >Clear</text>
<path d="M1638.6 229.55 L1642.3 233.45 L1646 229.55" fill="none" stroke="#ececec" stroke-width="1.9" stroke-linecap="round" stroke-linejoin="round"/>
<text x="1729.6" y="159.3" font-size="24" fill="#3d9be0" font-family="'Liberation Sans', sans-serif" textLength="15" lengthAdjust="spacingAndGlyphs" >A</text>
<text x="1730.2" y="181.6" font-size="25" fill="#d2d2d2" font-family="'Liberation Sans', sans-serif" textLength="13.2" lengthAdjust="spacingAndGlyphs" >Z</text>
<path d="M1749 152.800 h22.600 l-8.600 10.700 v11.500 h-5.400 v-11.500z" fill="none" stroke="#d2d2d2" stroke-width="1.6" stroke-linejoin="round"/>
<text x="1725" y="207.8" font-size="18" fill="#fff" font-family="'Liberation Sans', sans-serif" textLength="52" lengthAdjust="spacingAndGlyphs" >Sort &amp;</text>
<text x="1724.4" y="231.7" font-size="18" fill="#fff" font-family="'Liberation Sans', sans-serif" textLength="36.9" lengthAdjust="spacingAndGlyphs" >Filter</text>
<path d="M1768.5 223.05 L1772.2 226.95 L1775.9 223.05" fill="none" stroke="#ececec" stroke-width="1.9" stroke-linecap="round" stroke-linejoin="round"/>
<circle cx="1826" cy="158" r="15" fill="none" stroke="#d2d2d2" stroke-width="1.700"/>
<line x1="1815.5" y1="169" x2="1800" y2="183.5" stroke="#d2d2d2" stroke-width="1.7" stroke-linecap="round"/>
<text x="1795" y="207.8" font-size="18" fill="#fff" font-family="'Liberation Sans', sans-serif" textLength="52.5" lengthAdjust="spacingAndGlyphs" >Find &amp;</text>
<text x="1790.6" y="231.7" font-size="18" fill="#fff" font-family="'Liberation Sans', sans-serif" textLength="46" lengthAdjust="spacingAndGlyphs" >Select</text>
<path d="M1842.8 223.05 L1846.5 226.95 L1850.2 223.05" fill="none" stroke="#ececec" stroke-width="1.9" stroke-linecap="round" stroke-linejoin="round"/>
<text x="1682" y="268.6" font-size="17" fill="#fff" font-family="'Liberation Sans', sans-serif" textLength="48" lengthAdjust="spacingAndGlyphs" >Editing</text>
<line x1="1868.3" y1="135.6" x2="1868.3" y2="268.8" stroke="#4b4b4b" stroke-width="1.2" />
<rect x="1896.3" y="142.3" width="39.4" height="39.4" fill="none" stroke="#b84a1c" stroke-width="3" />
<rect x="1895.2" y="141.2" width="41.6" height="41.6" fill="none" stroke="#d65a26" stroke-width="0.9" />
<rect x="1898" y="144" width="36" height="36" fill="none" stroke="#d65a26" stroke-width="0.9" />
<rect x="1900.8" y="146.8" width="12.6" height="12.6" fill="none" stroke="#d25726" stroke-width="1.7" />
<rect x="1918.8" y="146.8" width="12.6" height="12.6" fill="none" stroke="#d25726" stroke-width="1.7" />
<rect x="1900.8" y="164.6" width="12.6" height="12.6" fill="none" stroke="#d25726" stroke-width="1.7" />
<rect x="1918.8" y="164.6" width="12.6" height="12.6" fill="none" stroke="#d25726" stroke-width="1.7" />
<text x="1885.5" y="207.8" font-size="18" fill="#fff" font-family="'Liberation Sans', sans-serif" textLength="62" lengthAdjust="spacingAndGlyphs" >Add-ins</text>
<text x="1888" y="268.6" font-size="17" fill="#fff" font-family="'Liberation Sans', sans-serif" textLength="53.3" lengthAdjust="spacingAndGlyphs" >Add-ins</text>
<line x1="1963.4" y1="135.6" x2="1963.4" y2="268.8" stroke="#4b4b4b" stroke-width="1.2" />
<rect x="1990.2" y="142.1" width="40" height="40" fill="none" stroke="#cdcdcd" stroke-width="1.7" />
<rect x="1991" y="143" width="38.4" height="4.2" fill="#6c6c6c" />
<line x1="1990.2" y1="147.5" x2="2030.2" y2="147.5" stroke="#cdcdcd" stroke-width="1.3" />
<line x1="1990.2" y1="159.5" x2="2030.2" y2="159.5" stroke="#cdcdcd" stroke-width="1.3" />
<line x1="1990.2" y1="170" x2="2030.2" y2="170" stroke="#cdcdcd" stroke-width="1.3" />
<line x1="2003" y1="170" x2="2003" y2="182" stroke="#cdcdcd" stroke-width="1.3" />
<line x1="2016.9" y1="170" x2="2016.9" y2="182" stroke="#cdcdcd" stroke-width="1.3" />
<circle cx="2008.400" cy="158.700" r="12.800" fill="#292929" stroke="#e2e2e2" stroke-width="1.700"/>
<rect x="2001.5" y="156.5" width="3.4" height="7.7" fill="#a8a8a8" />
<rect x="2006.3" y="150.6" width="4.2" height="13.6" fill="#292929" stroke="#e8e8e8" stroke-width="1.1" />
<rect x="2011.9" y="153.4" width="4" height="10.8" fill="#1f7fd6" />
<line x1="2017.7" y1="168.4" x2="2030.3" y2="182.2" stroke="#e2e2e2" stroke-width="1.9" />
<text x="1980" y="207.8" font-size="18" fill="#fff" font-family="'Liberation Sans', sans-serif" textLength="61.3" lengthAdjust="spacingAndGlyphs" >Analyze</text>
<text x="1992.5" y="231.7" font-size="18" fill="#fff" font-family="'Liberation Sans', sans-serif" textLength="36.3" lengthAdjust="spacingAndGlyphs" >Data</text>
<line x1="2056.6" y1="135.6" x2="2056.6" y2="268.8" stroke="#4b4b4b" stroke-width="1.2" />
<circle cx="2212" cy="199" r="56" fill="#fff"/>
<rect x="2181.6" y="173.2" width="61.4" height="52.8" fill="#5b62f2" />
<rect x="2190" y="181.6" width="18.8" height="14.4" fill="#fff" />
<rect x="2216.4" y="181.6" width="18.8" height="14.4" fill="#fff" />
<rect x="2190" y="203.8" width="18.8" height="14.4" fill="#fff" />
<rect x="2216.4" y="203.8" width="18.8" height="14.4" fill="#fff" />
<g font-family="'DejaVu Sans Condensed', 'DejaVu Sans', 'Liberation Sans', sans-serif" font-weight="bold" font-size="48" fill="#fff" stroke="#fff" stroke-width="0.9">
<text x="2291.66" y="197.8" textLength="26.47" lengthAdjust="spacingAndGlyphs">F</text>
<text x="2316.64" y="197.8" textLength="16.51" lengthAdjust="spacingAndGlyphs">I</text>
<text x="2331.09" y="197.8" textLength="38.65" lengthAdjust="spacingAndGlyphs">N</text>
<text x="2366.68" y="197.8" textLength="47.22" lengthAdjust="spacingAndGlyphs">M</text>
<text x="2411.80" y="197.8" textLength="40.16" lengthAdjust="spacingAndGlyphs">O</text>
<text x="2450.79" y="197.8" textLength="34.62" lengthAdjust="spacingAndGlyphs">D</text>
<text x="2485.81" y="197.8" textLength="27.61" lengthAdjust="spacingAndGlyphs">E</text>
<text x="2512.37" y="197.8" textLength="21.70" lengthAdjust="spacingAndGlyphs">L</text>
<text x="2531.87" y="197.8" textLength="32.77" lengthAdjust="spacingAndGlyphs">S</text>
<text x="2564.25" y="197.8" textLength="21.82" lengthAdjust="spacingAndGlyphs">L</text>
<text x="2586.00" y="197.8" textLength="34.70" lengthAdjust="spacingAndGlyphs">A</text>
<text x="2621.10" y="197.8" textLength="33.43" lengthAdjust="spacingAndGlyphs">B</text>
</g>
<circle cx="2431.800" cy="180.150" r="13.400" fill="#292929" stroke="#fff" stroke-width="8.600"/>
<rect x="2424.3" y="152.3" width="14.1" height="31.6" fill="#292929" rx="7" />
<rect x="2426.9" y="154.9" width="8.9" height="26.5" fill="#fff" rx="4.4" />
<text x="2296.500" y="237" font-size="35.500" fill="#fff" font-family="'Liberation Sans', sans-serif" textLength="355.800" lengthAdjust="spacing">Templates</text>
<path d="M2851 254 L2857 260 L2863 254" fill="none" stroke="#d2d2d2" stroke-width="1.8" stroke-linecap="round" stroke-linejoin="round"/>
<rect x="11" y="278" width="2849.5" height="22" fill="#0a0a0a" />
<path d="M44 281.500 V296 H30z" fill="#5a5a5a" />
<rect x="47" y="278" width="23.8" height="22" fill="#4a4a4a" />
<rect x="47" y="298" width="23.8" height="2" fill="#1e7b45" />
<line x1="70.8" y1="279" x2="70.8" y2="300" stroke="#3a3a3a" stroke-width="1.2" />
<text x="59.4" y="295.3" font-size="16.5" fill="#e8e8e8" font-family="'Liberation Sans', sans-serif" text-anchor="middle" >A</text>
<line x1="93.4" y1="279" x2="93.4" y2="300" stroke="#3a3a3a" stroke-width="1.2" />
<text x="82.6" y="295.3" font-size="16.5" fill="#e8e8e8" font-family="'Liberation Sans', sans-serif" text-anchor="middle" >B</text>
<line x1="212.4" y1="279" x2="212.4" y2="300" stroke="#3a3a3a" stroke-width="1.2" />
<text x="153.4" y="295.3" font-size="16.5" fill="#e8e8e8" font-family="'Liberation Sans', sans-serif" text-anchor="middle" >C</text>
<line x1="331.4" y1="279" x2="331.4" y2="300" stroke="#3a3a3a" stroke-width="1.2" />
<text x="272.4" y="295.3" font-size="16.5" fill="#e8e8e8" font-family="'Liberation Sans', sans-serif" text-anchor="middle" >D</text>
<line x1="450.4" y1="279" x2="450.4" y2="300" stroke="#3a3a3a" stroke-width="1.2" />
<text x="391.4" y="295.3" font-size="16.5" fill="#e8e8e8" font-family="'Liberation Sans', sans-serif" text-anchor="middle" >E</text>
<line x1="569.4" y1="279" x2="569.4" y2="300" stroke="#3a3a3a" stroke-width="1.2" />
<text x="510.4" y="295.3" font-size="16.5" fill="#e8e8e8" font-family="'Liberation Sans', sans-serif" text-anchor="middle" >F</text>
<line x1="688.4" y1="279" x2="688.4" y2="300" stroke="#3a3a3a" stroke-width="1.2" />
<text x="629.4" y="295.3" font-size="16.5" fill="#e8e8e8" font-family="'Liberation Sans', sans-serif" text-anchor="middle" >G</text>
<line x1="807.4" y1="279" x2="807.4" y2="300" stroke="#3a3a3a" stroke-width="1.2" />
<text x="748.4" y="295.3" font-size="16.5" fill="#e8e8e8" font-family="'Liberation Sans', sans-serif" text-anchor="middle" >H</text>
<line x1="926.4" y1="279" x2="926.4" y2="300" stroke="#3a3a3a" stroke-width="1.2" />
<text x="867.4" y="295.3" font-size="16.5" fill="#e8e8e8" font-family="'Liberation Sans', sans-serif" text-anchor="middle" >I</text>
<line x1="1045.4" y1="279" x2="1045.4" y2="300" stroke="#3a3a3a" stroke-width="1.2" />
<text x="986.4" y="295.3" font-size="16.5" fill="#e8e8e8" font-family="'Liberation Sans', sans-serif" text-anchor="middle" >J</text>
<line x1="1164.4" y1="279" x2="1164.4" y2="300" stroke="#3a3a3a" stroke-width="1.2" />
<text x="1105.4" y="295.3" font-size="16.5" fill="#e8e8e8" font-family="'Liberation Sans', sans-serif" text-anchor="middle" >K</text>
<line x1="1283.4" y1="279" x2="1283.4" y2="300" stroke="#3a3a3a" stroke-width="1.2" />
<text x="1224.4" y="295.3" font-size="16.5" fill="#e8e8e8" font-family="'Liberation Sans', sans-serif" text-anchor="middle" >L</text>
<line x1="1402.4" y1="279" x2="1402.4" y2="300" stroke="#3a3a3a" stroke-width="1.2" />
<text x="1343.4" y="295.3" font-size="16.5" fill="#e8e8e8" font-family="'Liberation Sans', sans-serif" text-anchor="middle" >M</text>
<line x1="1416.4" y1="279" x2="1416.4" y2="300" stroke="#3a3a3a" stroke-width="1.2" />
<text x="1409.4" y="295.3" font-size="16.5" fill="#e8e8e8" font-family="'Liberation Sans', sans-serif" text-anchor="middle" >N</text>
<line x1="1505.4" y1="279" x2="1505.4" y2="300" stroke="#3a3a3a" stroke-width="1.2" />
<text x="1461.4" y="295.3" font-size="16.5" fill="#e8e8e8" font-family="'Liberation Sans', sans-serif" text-anchor="middle" >O</text>
<line x1="1594.4" y1="279" x2="1594.4" y2="300" stroke="#3a3a3a" stroke-width="1.2" />
<text x="1550.4" y="295.3" font-size="16.5" fill="#e8e8e8" font-family="'Liberation Sans', sans-serif" text-anchor="middle" >P</text>
<line x1="1683.4" y1="279" x2="1683.4" y2="300" stroke="#3a3a3a" stroke-width="1.2" />
<text x="1639.4" y="295.3" font-size="16.5" fill="#e8e8e8" font-family="'Liberation Sans', sans-serif" text-anchor="middle" >Q</text>
<line x1="1772.4" y1="279" x2="1772.4" y2="300" stroke="#3a3a3a" stroke-width="1.2" />
<text x="1728.4" y="295.3" font-size="16.5" fill="#e8e8e8" font-family="'Liberation Sans', sans-serif" text-anchor="middle" >R</text>
<line x1="1861.4" y1="279" x2="1861.4" y2="300" stroke="#3a3a3a" stroke-width="1.2" />
<text x="1817.4" y="295.3" font-size="16.5" fill="#e8e8e8" font-family="'Liberation Sans', sans-serif" text-anchor="middle" >S</text>
<line x1="1950.4" y1="279" x2="1950.4" y2="300" stroke="#3a3a3a" stroke-width="1.2" />
<text x="1906.4" y="295.3" font-size="16.5" fill="#e8e8e8" font-family="'Liberation Sans', sans-serif" text-anchor="middle" >T</text>
<line x1="2039.4" y1="279" x2="2039.4" y2="300" stroke="#3a3a3a" stroke-width="1.2" />
<text x="1995.4" y="295.3" font-size="16.5" fill="#e8e8e8" font-family="'Liberation Sans', sans-serif" text-anchor="middle" >U</text>
<line x1="2128.4" y1="279" x2="2128.4" y2="300" stroke="#3a3a3a" stroke-width="1.2" />
<text x="2084.4" y="295.3" font-size="16.5" fill="#e8e8e8" font-family="'Liberation Sans', sans-serif" text-anchor="middle" >V</text>
<line x1="2217.4" y1="279" x2="2217.4" y2="300" stroke="#3a3a3a" stroke-width="1.2" />
<text x="2173.4" y="295.3" font-size="16.5" fill="#e8e8e8" font-family="'Liberation Sans', sans-serif" text-anchor="middle" >W</text>
<line x1="2306.4" y1="279" x2="2306.4" y2="300" stroke="#3a3a3a" stroke-width="1.2" />
<text x="2262.4" y="295.3" font-size="16.5" fill="#e8e8e8" font-family="'Liberation Sans', sans-serif" text-anchor="middle" >X</text>
<line x1="2395.4" y1="279" x2="2395.4" y2="300" stroke="#3a3a3a" stroke-width="1.2" />
<text x="2351.4" y="295.3" font-size="16.5" fill="#e8e8e8" font-family="'Liberation Sans', sans-serif" text-anchor="middle" >Y</text>
<line x1="2484.4" y1="279" x2="2484.4" y2="300" stroke="#3a3a3a" stroke-width="1.2" />
<text x="2440.4" y="295.3" font-size="16.5" fill="#e8e8e8" font-family="'Liberation Sans', sans-serif" text-anchor="middle" >Z</text>
<line x1="2573.4" y1="279" x2="2573.4" y2="300" stroke="#3a3a3a" stroke-width="1.2" />
<text x="2529.4" y="295.3" font-size="16.5" fill="#e8e8e8" font-family="'Liberation Sans', sans-serif" text-anchor="middle" >AA</text>
<line x1="2662.4" y1="279" x2="2662.4" y2="300" stroke="#3a3a3a" stroke-width="1.2" />
<text x="2618.4" y="295.3" font-size="16.5" fill="#e8e8e8" font-family="'Liberation Sans', sans-serif" text-anchor="middle" >AB</text>
<line x1="2751.4" y1="279" x2="2751.4" y2="300" stroke="#3a3a3a" stroke-width="1.2" />
<text x="2707.4" y="295.3" font-size="16.5" fill="#e8e8e8" font-family="'Liberation Sans', sans-serif" text-anchor="middle" >AC</text>
<line x1="2840.4" y1="279" x2="2840.4" y2="300" stroke="#3a3a3a" stroke-width="1.2" />
<text x="2796.4" y="295.3" font-size="16.5" fill="#e8e8e8" font-family="'Liberation Sans', sans-serif" text-anchor="middle" >AD</text>
<line x1="47" y1="279" x2="47" y2="300" stroke="#3a3a3a" stroke-width="1.2" />
<rect x="47" y="300" width="2813.4" height="1370" fill="#fff" />
<rect x="11" y="300" width="36" height="1370" fill="#0a0a0a" />
<defs><clipPath id="rowclip"><rect x="11" y="300" width="36" height="1370"/></clipPath></defs>
<g clip-path="url(#rowclip)">
<rect x="11" y="300" width="36" height="35" fill="#6b6b6b" />
<rect x="45.5" y="300" width="2" height="35" fill="#1e7b45" />
<text x="29" y="331.6" font-size="18" fill="#f0f0f0" font-family="'Liberation Sans', sans-serif" text-anchor="middle" >1</text>
<line x1="11" y1="335" x2="47" y2="335" stroke="#4a4a4a" stroke-width="1.2" />
<text x="29" y="363" font-size="18" fill="#f0f0f0" font-family="'Liberation Sans', sans-serif" text-anchor="middle" >2</text>
<line x1="11" y1="366.4" x2="47" y2="366.4" stroke="#4a4a4a" stroke-width="1.2" />
<text x="29" y="395" font-size="18" fill="#f0f0f0" font-family="'Liberation Sans', sans-serif" text-anchor="middle" >3</text>
<line x1="11" y1="398.4" x2="47" y2="398.4" stroke="#4a4a4a" stroke-width="1.2" />
<text x="29" y="417.8" font-size="18" fill="#f0f0f0" font-family="'Liberation Sans', sans-serif" text-anchor="middle" >4</text>
<line x1="11" y1="421.2" x2="47" y2="421.2" stroke="#4a4a4a" stroke-width="1.2" />
<text x="29" y="448.1" font-size="18" fill="#f0f0f0" font-family="'Liberation Sans', sans-serif" text-anchor="middle" >5</text>
<line x1="11" y1="454.5" x2="47" y2="454.5" stroke="#4a4a4a" stroke-width="1.2" />
<text x="29" y="482.1" font-size="18" fill="#f0f0f0" font-family="'Liberation Sans', sans-serif" text-anchor="middle" >6</text>
<line x1="11" y1="485.5" x2="47" y2="485.5" stroke="#4a4a4a" stroke-width="1.2" />
<text x="29" y="513.1" font-size="18" fill="#f0f0f0" font-family="'Liberation Sans', sans-serif" text-anchor="middle" >7</text>
<line x1="11" y1="516.5" x2="47" y2="516.5" stroke="#4a4a4a" stroke-width="1.2" />
<text x="29" y="544.1" font-size="18" fill="#f0f0f0" font-family="'Liberation Sans', sans-serif" text-anchor="middle" >8</text>
<line x1="11" y1="547.5" x2="47" y2="547.5" stroke="#4a4a4a" stroke-width="1.2" />
<text x="29" y="575.1" font-size="18" fill="#f0f0f0" font-family="'Liberation Sans', sans-serif" text-anchor="middle" >9</text>
<line x1="11" y1="578.5" x2="47" y2="578.5" stroke="#4a4a4a" stroke-width="1.2" />
<text x="29" y="606.1" font-size="18" fill="#f0f0f0" font-family="'Liberation Sans', sans-serif" text-anchor="middle" >10</text>
<line x1="11" y1="609.5" x2="47" y2="609.5" stroke="#4a4a4a" stroke-width="1.2" />
<text x="29" y="637.1" font-size="18" fill="#f0f0f0" font-family="'Liberation Sans', sans-serif" text-anchor="middle" >11</text>
<line x1="11" y1="640.5" x2="47" y2="640.5" stroke="#4a4a4a" stroke-width="1.2" />
<text x="29" y="668.1" font-size="18" fill="#f0f0f0" font-family="'Liberation Sans', sans-serif" text-anchor="middle" >12</text>
<line x1="11" y1="671.5" x2="47" y2="671.5" stroke="#4a4a4a" stroke-width="1.2" />
<text x="29" y="699.1" font-size="18" fill="#f0f0f0" font-family="'Liberation Sans', sans-serif" text-anchor="middle" >13</text>
<line x1="11" y1="702.5" x2="47" y2="702.5" stroke="#4a4a4a" stroke-width="1.2" />
<text x="29" y="730.1" font-size="18" fill="#f0f0f0" font-family="'Liberation Sans', sans-serif" text-anchor="middle" >14</text>
<line x1="11" y1="733.5" x2="47" y2="733.5" stroke="#4a4a4a" stroke-width="1.2" />
<text x="29" y="761.1" font-size="18" fill="#f0f0f0" font-family="'Liberation Sans', sans-serif" text-anchor="middle" >15</text>
<line x1="11" y1="764.5" x2="47" y2="764.5" stroke="#4a4a4a" stroke-width="1.2" />
<text x="29" y="792.1" font-size="18" fill="#f0f0f0" font-family="'Liberation Sans', sans-serif" text-anchor="middle" >16</text>
<line x1="11" y1="795.5" x2="47" y2="795.5" stroke="#4a4a4a" stroke-width="1.2" />
<text x="29" y="823.1" font-size="18" fill="#f0f0f0" font-family="'Liberation Sans', sans-serif" text-anchor="middle" >17</text>
<line x1="11" y1="826.5" x2="47" y2="826.5" stroke="#4a4a4a" stroke-width="1.2" />
<text x="29" y="854.1" font-size="18" fill="#f0f0f0" font-family="'Liberation Sans', sans-serif" text-anchor="middle" >18</text>
<line x1="11" y1="857.5" x2="47" y2="857.5" stroke="#4a4a4a" stroke-width="1.2" />
<text x="29" y="885.1" font-size="18" fill="#f0f0f0" font-family="'Liberation Sans', sans-serif" text-anchor="middle" >19</text>
<line x1="11" y1="888.5" x2="47" y2="888.5" stroke="#4a4a4a" stroke-width="1.2" />
<text x="29" y="916.1" font-size="18" fill="#f0f0f0" font-family="'Liberation Sans', sans-serif" text-anchor="middle" >20</text>
<line x1="11" y1="919.5" x2="47" y2="919.5" stroke="#4a4a4a" stroke-width="1.2" />
<text x="29" y="947.1" font-size="18" fill="#f0f0f0" font-family="'Liberation Sans', sans-serif" text-anchor="middle" >21</text>
<line x1="11" y1="950.5" x2="47" y2="950.5" stroke="#4a4a4a" stroke-width="1.2" />
<text x="29" y="978.1" font-size="18" fill="#f0f0f0" font-family="'Liberation Sans', sans-serif" text-anchor="middle" >22</text>
<line x1="11" y1="981.5" x2="47" y2="981.5" stroke="#4a4a4a" stroke-width="1.2" />
<text x="29" y="1009.1" font-size="18" fill="#f0f0f0" font-family="'Liberation Sans', sans-serif" text-anchor="middle" >23</text>
<line x1="11" y1="1012.5" x2="47" y2="1012.5" stroke="#4a4a4a" stroke-width="1.2" />
<text x="29" y="1040.1" font-size="18" fill="#f0f0f0" font-family="'Liberation Sans', sans-serif" text-anchor="middle" >24</text>
<line x1="11" y1="1043.5" x2="47" y2="1043.5" stroke="#4a4a4a" stroke-width="1.2" />
<clipPath id="rc25"><rect x="11" y="1043.5" width="36" height="11.1"/></clipPath>
<g clip-path="url(#rc25)">
<text x="29" y="1048.1" font-size="18" fill="#f0f0f0" font-family="'Liberation Sans', sans-serif" text-anchor="middle" >25</text>
</g>
<line x1="11" y1="1054.6" x2="47" y2="1054.6" stroke="#4a4a4a" stroke-width="1.2" />
<text x="29" y="1082.2" font-size="18" fill="#f0f0f0" font-family="'Liberation Sans', sans-serif" text-anchor="middle" >26</text>
<line x1="11" y1="1085.6" x2="47" y2="1085.6" stroke="#4a4a4a" stroke-width="1.2" />
<text x="29" y="1113.2" font-size="18" fill="#f0f0f0" font-family="'Liberation Sans', sans-serif" text-anchor="middle" >27</text>
<line x1="11" y1="1116.6" x2="47" y2="1116.6" stroke="#4a4a4a" stroke-width="1.2" />
<text x="29" y="1144.2" font-size="18" fill="#f0f0f0" font-family="'Liberation Sans', sans-serif" text-anchor="middle" >28</text>
<line x1="11" y1="1147.6" x2="47" y2="1147.6" stroke="#4a4a4a" stroke-width="1.2" />
<text x="29" y="1175.2" font-size="18" fill="#f0f0f0" font-family="'Liberation Sans', sans-serif" text-anchor="middle" >29</text>
<line x1="11" y1="1178.6" x2="47" y2="1178.6" stroke="#4a4a4a" stroke-width="1.2" />
<text x="29" y="1206.2" font-size="18" fill="#f0f0f0" font-family="'Liberation Sans', sans-serif" text-anchor="middle" >30</text>
<line x1="11" y1="1209.6" x2="47" y2="1209.6" stroke="#4a4a4a" stroke-width="1.2" />
<text x="29" y="1237.2" font-size="18" fill="#f0f0f0" font-family="'Liberation Sans', sans-serif" text-anchor="middle" >31</text>
<line x1="11" y1="1240.6" x2="47" y2="1240.6" stroke="#4a4a4a" stroke-width="1.2" />
<text x="29" y="1268.2" font-size="18" fill="#f0f0f0" font-family="'Liberation Sans', sans-serif" text-anchor="middle" >32</text>
<line x1="11" y1="1271.6" x2="47" y2="1271.6" stroke="#4a4a4a" stroke-width="1.2" />
<text x="29" y="1299.2" font-size="18" fill="#f0f0f0" font-family="'Liberation Sans', sans-serif" text-anchor="middle" >33</text>
<line x1="11" y1="1302.6" x2="47" y2="1302.6" stroke="#4a4a4a" stroke-width="1.2" />
<text x="29" y="1330.2" font-size="18" fill="#f0f0f0" font-family="'Liberation Sans', sans-serif" text-anchor="middle" >34</text>
<line x1="11" y1="1333.6" x2="47" y2="1333.6" stroke="#4a4a4a" stroke-width="1.2" />
<text x="29" y="1361.2" font-size="18" fill="#f0f0f0" font-family="'Liberation Sans', sans-serif" text-anchor="middle" >35</text>
<line x1="11" y1="1364.6" x2="47" y2="1364.6" stroke="#4a4a4a" stroke-width="1.2" />
<text x="29" y="1392.2" font-size="18" fill="#f0f0f0" font-family="'Liberation Sans', sans-serif" text-anchor="middle" >36</text>
<line x1="11" y1="1395.6" x2="47" y2="1395.6" stroke="#4a4a4a" stroke-width="1.2" />
<text x="29" y="1423.2" font-size="18" fill="#f0f0f0" font-family="'Liberation Sans', sans-serif" text-anchor="middle" >37</text>
<line x1="11" y1="1426.6" x2="47" y2="1426.6" stroke="#4a4a4a" stroke-width="1.2" />
<text x="29" y="1454.2" font-size="18" fill="#f0f0f0" font-family="'Liberation Sans', sans-serif" text-anchor="middle" >38</text>
<line x1="11" y1="1457.6" x2="47" y2="1457.6" stroke="#4a4a4a" stroke-width="1.2" />
<text x="29" y="1485.2" font-size="18" fill="#f0f0f0" font-family="'Liberation Sans', sans-serif" text-anchor="middle" >39</text>
<line x1="11" y1="1488.6" x2="47" y2="1488.6" stroke="#4a4a4a" stroke-width="1.2" />
<text x="29" y="1516.2" font-size="18" fill="#f0f0f0" font-family="'Liberation Sans', sans-serif" text-anchor="middle" >40</text>
<line x1="11" y1="1519.6" x2="47" y2="1519.6" stroke="#4a4a4a" stroke-width="1.2" />
<text x="29" y="1547.2" font-size="18" fill="#f0f0f0" font-family="'Liberation Sans', sans-serif" text-anchor="middle" >41</text>
<line x1="11" y1="1550.6" x2="47" y2="1550.6" stroke="#4a4a4a" stroke-width="1.2" />
<text x="29" y="1578.2" font-size="18" fill="#f0f0f0" font-family="'Liberation Sans', sans-serif" text-anchor="middle" >42</text>
<line x1="11" y1="1581.6" x2="47" y2="1581.6" stroke="#4a4a4a" stroke-width="1.2" />
<text x="29" y="1609.2" font-size="18" fill="#f0f0f0" font-family="'Liberation Sans', sans-serif" text-anchor="middle" >43</text>
<line x1="11" y1="1612.6" x2="47" y2="1612.6" stroke="#4a4a4a" stroke-width="1.2" />
<text x="29" y="1640.2" font-size="18" fill="#f0f0f0" font-family="'Liberation Sans', sans-serif" text-anchor="middle" >44</text>
<line x1="11" y1="1643.6" x2="47" y2="1643.6" stroke="#4a4a4a" stroke-width="1.2" />
<clipPath id="rc45"><rect x="11" y="1643.6" width="36" height="11.1"/></clipPath>
<g clip-path="url(#rc45)">
<text x="29" y="1648.2" font-size="18" fill="#f0f0f0" font-family="'Liberation Sans', sans-serif" text-anchor="middle" >45</text>
</g>
<line x1="11" y1="1654.7" x2="47" y2="1654.7" stroke="#4a4a4a" stroke-width="1.2" />
<text x="29" y="1682.3" font-size="18" fill="#f0f0f0" font-family="'Liberation Sans', sans-serif" text-anchor="middle" >46</text>
<line x1="11" y1="1685.7" x2="47" y2="1685.7" stroke="#4a4a4a" stroke-width="1.2" />
</g>
<line x1="47.2" y1="300" x2="47.2" y2="1670.3" stroke="#3c3c3c" stroke-width="1" />
<line x1="11" y1="1670" x2="47" y2="1670" stroke="#4a4a4a" stroke-width="1" />
<text x="76.6" y="330" font-size="31.5" fill="#262626" font-family="'DejaVu Sans Condensed', 'DejaVu Sans', 'Liberation Sans', sans-serif" font-weight="bold" textLength="249.4" lengthAdjust="spacingAndGlyphs" >Financial Charts</text>
<text x="76" y="360.7" font-size="25" fill="#000" font-family="'DejaVu Sans Condensed', 'DejaVu Sans', 'Liberation Sans', sans-serif" font-weight="bold" textLength="242" lengthAdjust="spacingAndGlyphs" >ABC Company Inc.</text>
<text x="74.3" y="388.3" font-size="16.5" fill="#2a7af3" font-family="'DejaVu Sans Condensed', 'DejaVu Sans', 'Liberation Sans', sans-serif" font-weight="bold" textLength="209.7" lengthAdjust="spacingAndGlyphs" >Go to Table of Contents</text>
<line x1="74.3" y1="391.3" x2="284" y2="391.3" stroke="#2a7af3" stroke-width="1.6" />
<rect x="70.5" y="421.2" width="1331.9" height="33" fill="#4b4fd0" />
<rect x="1416.4" y="421.2" width="1424.6" height="33" fill="#4b4fd0" />
<line x1="47" y1="454.5" x2="70.5" y2="454.5" stroke="#b5b5b5" stroke-width="1" />
<line x1="2841" y1="454.5" x2="2860.4" y2="454.5" stroke="#b5b5b5" stroke-width="1" />
<text x="689.042" y="447.3" font-size="25.5" fill="#fff" font-family="'DejaVu Sans Condensed', 'DejaVu Sans', 'Liberation Sans', sans-serif" font-weight="bold" textLength="94.9153" lengthAdjust="spacingAndGlyphs" >5 years</text>
<text x="2060.06" y="447.3" font-size="25.5" fill="#fff" font-family="'DejaVu Sans Condensed', 'DejaVu Sans', 'Liberation Sans', sans-serif" font-weight="bold" textLength="136.876" lengthAdjust="spacingAndGlyphs" >60 months</text>
<rect x="1402.4" y="421.2" width="14" height="1249" fill="#c0c0c0" />
<rect x="93.4" y="1043.2" width="2747.6" height="11.7" fill="#c0c0c0" />
<rect x="93.4" y="1643.2" width="2747.6" height="11.7" fill="#c0c0c0" />
<text x="326" y="497.6" font-size="35.5" fill="#000" font-family="'DejaVu Sans Condensed', 'DejaVu Sans', 'Liberation Sans', sans-serif" font-weight="bold" textLength="548" lengthAdjust="spacingAndGlyphs" stroke="#000" stroke-width="0.7">REVENUE BREAKDOWN - $'000</text>
<rect x="118" y="537" width="9.5" height="9.5" fill="#4ab3e8" />
<text x="132" y="547.5" font-size="17.2" fill="#000" font-family="'DejaVu Sans Condensed', 'DejaVu Sans', 'Liberation Sans', sans-serif" textLength="168" lengthAdjust="spacingAndGlyphs" >Tarot Reading 30 min</text>
<rect x="343" y="537" width="9.5" height="9.5" fill="#4d50d3" />
<text x="356" y="547.5" font-size="17.2" fill="#000" font-family="'DejaVu Sans Condensed', 'DejaVu Sans', 'Liberation Sans', sans-serif" textLength="179" lengthAdjust="spacingAndGlyphs" >Astrology Chart 60 min</text>
<rect x="578" y="537" width="9.5" height="9.5" fill="#f07d71" />
<text x="592" y="547.5" font-size="17.2" fill="#000" font-family="'DejaVu Sans Condensed', 'DejaVu Sans', 'Liberation Sans', sans-serif" textLength="175" lengthAdjust="spacingAndGlyphs" >Energy Healing 45 min</text>
<rect x="811" y="537" width="9.5" height="9.5" fill="#f2b705" />
<text x="825" y="547.5" font-size="17.2" fill="#000" font-family="'DejaVu Sans Condensed', 'DejaVu Sans', 'Liberation Sans', sans-serif" textLength="137" lengthAdjust="spacingAndGlyphs" >Premium Package</text>
<rect x="1006" y="537" width="9.5" height="9.5" fill="#2bb3a3" />
<rect x="1019.5" y="541.7" width="4.5" height="1.6" fill="#222" />
<rect x="1069" y="537" width="9.5" height="9.5" fill="#5b9b3c" />
<rect x="1082.5" y="541.7" width="4.5" height="1.6" fill="#222" />
<rect x="1132" y="537" width="9.5" height="9.5" fill="#8e9fd9" />
<rect x="1145.5" y="541.7" width="4.5" height="1.6" fill="#222" />
<rect x="1195" y="537" width="9.5" height="9.5" fill="#f0a58d" />
<rect x="1208.5" y="541.7" width="4.5" height="1.6" fill="#222" />
<rect x="1259" y="537" width="9.5" height="9.5" fill="#c2c2c2" />
<rect x="1272.5" y="541.7" width="4.5" height="1.6" fill="#222" />
<rect x="1322" y="537" width="9.5" height="9.5" fill="#fdd17f" />
<rect x="1335.5" y="541.7" width="4.5" height="1.6" fill="#222" />
<line x1="200" y1="613.5" x2="1320" y2="613.5" stroke="#6fb0d6" stroke-width="1" />
<line x1="200" y1="656.5" x2="1320" y2="656.5" stroke="#6fb0d6" stroke-width="1" />
<line x1="200" y1="698.5" x2="1320" y2="698.5" stroke="#6fb0d6" stroke-width="1" />
<line x1="200" y1="741.5" x2="1320" y2="741.5" stroke="#6fb0d6" stroke-width="1" />
<line x1="200" y1="784.5" x2="1320" y2="784.5" stroke="#6fb0d6" stroke-width="1" />
<line x1="200" y1="827.5" x2="1320" y2="827.5" stroke="#6fb0d6" stroke-width="1" />
<line x1="200" y1="869.5" x2="1320" y2="869.5" stroke="#6fb0d6" stroke-width="1" />
<line x1="200" y1="912.5" x2="1320" y2="912.5" stroke="#6fb0d6" stroke-width="1" />
<text x="118.9" y="620.6" font-size="21" fill="#000" font-family="'DejaVu Sans Condensed', 'DejaVu Sans', 'Liberation Sans', sans-serif" font-weight="bold" textLength="55.1" lengthAdjust="spacingAndGlyphs" >1,600</text>
<text x="118.9" y="663.3" font-size="21" fill="#000" font-family="'DejaVu Sans Condensed', 'DejaVu Sans', 'Liberation Sans', sans-serif" font-weight="bold" textLength="55.1" lengthAdjust="spacingAndGlyphs" >1,400</text>
<text x="118.9" y="706" font-size="21" fill="#000" font-family="'DejaVu Sans Condensed', 'DejaVu Sans', 'Liberation Sans', sans-serif" font-weight="bold" textLength="55.1" lengthAdjust="spacingAndGlyphs" >1,200</text>
<text x="118.9" y="748.7" font-size="21" fill="#000" font-family="'DejaVu Sans Condensed', 'DejaVu Sans', 'Liberation Sans', sans-serif" font-weight="bold" textLength="55.1" lengthAdjust="spacingAndGlyphs" >1,000</text>
<text x="137.4" y="791.4" font-size="21" fill="#000" font-family="'DejaVu Sans Condensed', 'DejaVu Sans', 'Liberation Sans', sans-serif" font-weight="bold" textLength="36.6" lengthAdjust="spacingAndGlyphs" >800</text>
<text x="137.4" y="834.1" font-size="21" fill="#000" font-family="'DejaVu Sans Condensed', 'DejaVu Sans', 'Liberation Sans', sans-serif" font-weight="bold" textLength="36.6" lengthAdjust="spacingAndGlyphs" >600</text>
<text x="137.4" y="876.8" font-size="21" fill="#000" font-family="'DejaVu Sans Condensed', 'DejaVu Sans', 'Liberation Sans', sans-serif" font-weight="bold" textLength="36.6" lengthAdjust="spacingAndGlyphs" >400</text>
<text x="137.4" y="919.5" font-size="21" fill="#000" font-family="'DejaVu Sans Condensed', 'DejaVu Sans', 'Liberation Sans', sans-serif" font-weight="bold" textLength="36.6" lengthAdjust="spacingAndGlyphs" >200</text>
<rect x="155.7" y="952.8" width="7" height="3.2" fill="#000" />
<rect x="241.5" y="930" width="140" height="25.3" fill="#4ab3e8" />
<rect x="241.5" y="902" width="140" height="28" fill="#4d50d3" />
<rect x="241.5" y="889" width="140" height="13" fill="#f07d71" />
<text x="287.5" y="1007.4" font-size="21" fill="#000" font-family="'DejaVu Sans Condensed', 'DejaVu Sans', 'Liberation Sans', sans-serif" font-weight="bold" textLength="49" lengthAdjust="spacingAndGlyphs" >2026</text>
<rect x="465.5" y="904" width="140" height="51.3" fill="#4ab3e8" />
<rect x="465.5" y="848" width="140" height="56" fill="#4d50d3" />
<rect x="465.5" y="823" width="140" height="25" fill="#f07d71" />
<text x="511.5" y="1007.4" font-size="21" fill="#000" font-family="'DejaVu Sans Condensed', 'DejaVu Sans', 'Liberation Sans', sans-serif" font-weight="bold" textLength="49" lengthAdjust="spacingAndGlyphs" >2027</text>
<rect x="689.5" y="883" width="140" height="72.3" fill="#4ab3e8" />
<rect x="689.5" y="804" width="140" height="79" fill="#4d50d3" />
<rect x="689.5" y="768" width="140" height="36" fill="#f07d71" />
<text x="735.5" y="1007.4" font-size="21" fill="#000" font-family="'DejaVu Sans Condensed', 'DejaVu Sans', 'Liberation Sans', sans-serif" font-weight="bold" textLength="49" lengthAdjust="spacingAndGlyphs" >2028</text>
<rect x="913.5" y="860" width="140" height="95.3" fill="#4ab3e8" />
<rect x="913.5" y="755" width="140" height="105" fill="#4d50d3" />
<rect x="913.5" y="709" width="140" height="46" fill="#f07d71" />
<text x="959.5" y="1007.4" font-size="21" fill="#000" font-family="'DejaVu Sans Condensed', 'DejaVu Sans', 'Liberation Sans', sans-serif" font-weight="bold" textLength="49" lengthAdjust="spacingAndGlyphs" >2029</text>
<rect x="1137.5" y="834" width="140" height="121.3" fill="#4ab3e8" />
<rect x="1137.5" y="702" width="140" height="132" fill="#4d50d3" />
<rect x="1137.5" y="644" width="140" height="58" fill="#f07d71" />
<text x="1183.5" y="1007.4" font-size="21" fill="#000" font-family="'DejaVu Sans Condensed', 'DejaVu Sans', 'Liberation Sans', sans-serif" font-weight="bold" textLength="49" lengthAdjust="spacingAndGlyphs" >2030</text>
<line x1="199" y1="955.3" x2="1320" y2="955.3" stroke="#4a9fdb" stroke-width="1.8" />
<text x="444" y="1098.1" font-size="35.5" fill="#000" font-family="'DejaVu Sans Condensed', 'DejaVu Sans', 'Liberation Sans', sans-serif" font-weight="bold" textLength="414" lengthAdjust="spacingAndGlyphs" stroke="#000" stroke-width="0.7">CASH BALANCE - $'000</text>
<line x1="178.5" y1="1144.5" x2="1308.5" y2="1144.5" stroke="#6fb0d6" stroke-width="1" />
<line x1="178.5" y1="1227.5" x2="1308.5" y2="1227.5" stroke="#6fb0d6" stroke-width="1" />
<line x1="178.5" y1="1309.5" x2="1308.5" y2="1309.5" stroke="#6fb0d6" stroke-width="1" />
<line x1="178.5" y1="1391.5" x2="1308.5" y2="1391.5" stroke="#6fb0d6" stroke-width="1" />
<line x1="178.5" y1="1474.5" x2="1308.5" y2="1474.5" stroke="#6fb0d6" stroke-width="1" />
<text x="98.9" y="1151.6" font-size="21" fill="#000" font-family="'DejaVu Sans Condensed', 'DejaVu Sans', 'Liberation Sans', sans-serif" font-weight="bold" textLength="55.1" lengthAdjust="spacingAndGlyphs" >2,500</text>
<text x="98.9" y="1234.6" font-size="21" fill="#000" font-family="'DejaVu Sans Condensed', 'DejaVu Sans', 'Liberation Sans', sans-serif" font-weight="bold" textLength="55.1" lengthAdjust="spacingAndGlyphs" >2,000</text>
<text x="98.9" y="1316.6" font-size="21" fill="#000" font-family="'DejaVu Sans Condensed', 'DejaVu Sans', 'Liberation Sans', sans-serif" font-weight="bold" textLength="55.1" lengthAdjust="spacingAndGlyphs" >1,500</text>
<text x="98.9" y="1398.6" font-size="21" fill="#000" font-family="'DejaVu Sans Condensed', 'DejaVu Sans', 'Liberation Sans', sans-serif" font-weight="bold" textLength="55.1" lengthAdjust="spacingAndGlyphs" >1,000</text>
<text x="117.4" y="1481.1" font-size="21" fill="#000" font-family="'DejaVu Sans Condensed', 'DejaVu Sans', 'Liberation Sans', sans-serif" font-weight="bold" textLength="36.6" lengthAdjust="spacingAndGlyphs" >500</text>
<rect x="135.7" y="1553.2" width="7" height="3.2" fill="#000" />
<rect x="221" y="1400" width="142" height="155.5" fill="#4ab3e8" />
<text x="267.5" y="1609" font-size="21" fill="#000" font-family="'DejaVu Sans Condensed', 'DejaVu Sans', 'Liberation Sans', sans-serif" font-weight="bold" textLength="49" lengthAdjust="spacingAndGlyphs" >2026</text>
<rect x="447" y="1380" width="142" height="175.5" fill="#4ab3e8" />
<text x="493.5" y="1609" font-size="21" fill="#000" font-family="'DejaVu Sans Condensed', 'DejaVu Sans', 'Liberation Sans', sans-serif" font-weight="bold" textLength="49" lengthAdjust="spacingAndGlyphs" >2027</text>
<rect x="673" y="1346" width="142" height="209.5" fill="#4ab3e8" />
<text x="719.5" y="1609" font-size="21" fill="#000" font-family="'DejaVu Sans Condensed', 'DejaVu Sans', 'Liberation Sans', sans-serif" font-weight="bold" textLength="49" lengthAdjust="spacingAndGlyphs" >2028</text>
<rect x="899" y="1288" width="142" height="267.5" fill="#4ab3e8" />
<text x="945.5" y="1609" font-size="21" fill="#000" font-family="'DejaVu Sans Condensed', 'DejaVu Sans', 'Liberation Sans', sans-serif" font-weight="bold" textLength="49" lengthAdjust="spacingAndGlyphs" >2029</text>
<rect x="1125" y="1197" width="142" height="358.5" fill="#4ab3e8" />
<text x="1171.5" y="1609" font-size="21" fill="#000" font-family="'DejaVu Sans Condensed', 'DejaVu Sans', 'Liberation Sans', sans-serif" font-weight="bold" textLength="49" lengthAdjust="spacingAndGlyphs" >2030</text>
<line x1="178" y1="1555.5" x2="1309.5" y2="1555.5" stroke="#4472c4" stroke-width="1.8" />
<line x1="178.8" y1="1555.5" x2="178.8" y2="1563" stroke="#4472c4" stroke-width="1.6" />
<line x1="404.8" y1="1555.5" x2="404.8" y2="1563" stroke="#4472c4" stroke-width="1.6" />
<line x1="630.8" y1="1555.5" x2="630.8" y2="1563" stroke="#4472c4" stroke-width="1.6" />
<line x1="856.8" y1="1555.5" x2="856.8" y2="1563" stroke="#4472c4" stroke-width="1.6" />
<line x1="1082.8" y1="1555.5" x2="1082.8" y2="1563" stroke="#4472c4" stroke-width="1.6" />
<line x1="1308.8" y1="1555.5" x2="1308.8" y2="1563" stroke="#4472c4" stroke-width="1.6" />
<line x1="291.8" y1="1555.5" x2="291.8" y2="1560" stroke="#4472c4" stroke-width="1.4" />
<line x1="517.8" y1="1555.5" x2="517.8" y2="1560" stroke="#4472c4" stroke-width="1.4" />
<line x1="743.8" y1="1555.5" x2="743.8" y2="1560" stroke="#4472c4" stroke-width="1.4" />
<line x1="969.8" y1="1555.5" x2="969.8" y2="1560" stroke="#4472c4" stroke-width="1.4" />
<line x1="1195.8" y1="1555.5" x2="1195.8" y2="1560" stroke="#4472c4" stroke-width="1.4" />
<text x="1825" y="496.1" font-size="35.5" fill="#000" font-family="'DejaVu Sans Condensed', 'DejaVu Sans', 'Liberation Sans', sans-serif" font-weight="bold" textLength="549" lengthAdjust="spacingAndGlyphs" stroke="#000" stroke-width="0.7">REVENUE BREAKDOWN - $'000</text>
<rect x="1464" y="527" width="9.5" height="9.5" fill="#4ab3e8" />
<text x="1478" y="537.5" font-size="17.2" fill="#000" font-family="'DejaVu Sans Condensed', 'DejaVu Sans', 'Liberation Sans', sans-serif" textLength="168" lengthAdjust="spacingAndGlyphs" >Tarot Reading 30 min</text>
<rect x="1683" y="527" width="9.5" height="9.5" fill="#4d50d3" />
<text x="1697" y="537.5" font-size="17.2" fill="#000" font-family="'DejaVu Sans Condensed', 'DejaVu Sans', 'Liberation Sans', sans-serif" textLength="177.5" lengthAdjust="spacingAndGlyphs" >Astrology Chart 60 min</text>
<rect x="1911" y="527" width="9.5" height="9.5" fill="#f07d71" />
<text x="1925" y="537.5" font-size="17.2" fill="#000" font-family="'DejaVu Sans Condensed', 'DejaVu Sans', 'Liberation Sans', sans-serif" textLength="175" lengthAdjust="spacingAndGlyphs" >Energy Healing 45 min</text>
<rect x="2138" y="527" width="9.5" height="9.5" fill="#f2b705" />
<text x="2151" y="537.5" font-size="17.2" fill="#000" font-family="'DejaVu Sans Condensed', 'DejaVu Sans', 'Liberation Sans', sans-serif" textLength="138" lengthAdjust="spacingAndGlyphs" >Premium Package</text>
<rect x="2326" y="527" width="9.5" height="9.5" fill="#2bb3a3" />
<rect x="2339.5" y="531.7" width="4.5" height="1.6" fill="#222" />
<rect x="2382.5" y="527" width="9.5" height="9.5" fill="#5b9b3c" />
<rect x="2396" y="531.7" width="4.5" height="1.6" fill="#222" />
<rect x="2439" y="527" width="9.5" height="9.5" fill="#8e9fd9" />
<rect x="2452.5" y="531.7" width="4.5" height="1.6" fill="#222" />
<rect x="2496" y="527" width="9.5" height="9.5" fill="#f0a58d" />
<rect x="2509.5" y="531.7" width="4.5" height="1.6" fill="#222" />
<rect x="2552" y="527" width="9.5" height="9.5" fill="#c2c2c2" />
<rect x="2565.5" y="531.7" width="4.5" height="1.6" fill="#222" />
<rect x="2609" y="527" width="9.5" height="9.5" fill="#fdd17f" />
<rect x="2622.5" y="531.7" width="4.5" height="1.6" fill="#222" />
<line x1="1518" y1="612.5" x2="2791.6" y2="612.5" stroke="#6fb0d6" stroke-width="1" />
<line x1="1518" y1="661.5" x2="2791.6" y2="661.5" stroke="#6fb0d6" stroke-width="1" />
<line x1="1518" y1="710.5" x2="2791.6" y2="710.5" stroke="#6fb0d6" stroke-width="1" />
<line x1="1518" y1="758.5" x2="2791.6" y2="758.5" stroke="#6fb0d6" stroke-width="1" />
<line x1="1518" y1="807.5" x2="2791.6" y2="807.5" stroke="#6fb0d6" stroke-width="1" />
<line x1="1518" y1="856.5" x2="2791.6" y2="856.5" stroke="#6fb0d6" stroke-width="1" />
<line x1="1518" y1="904.5" x2="2791.6" y2="904.5" stroke="#6fb0d6" stroke-width="1" />
<text x="1457.4" y="619.7" font-size="21" fill="#000" font-family="'DejaVu Sans Condensed', 'DejaVu Sans', 'Liberation Sans', sans-serif" font-weight="bold" textLength="36.6" lengthAdjust="spacingAndGlyphs" >140</text>
<text x="1457.4" y="668.4" font-size="21" fill="#000" font-family="'DejaVu Sans Condensed', 'DejaVu Sans', 'Liberation Sans', sans-serif" font-weight="bold" textLength="36.6" lengthAdjust="spacingAndGlyphs" >120</text>
<text x="1457.4" y="717.1" font-size="21" fill="#000" font-family="'DejaVu Sans Condensed', 'DejaVu Sans', 'Liberation Sans', sans-serif" font-weight="bold" textLength="36.6" lengthAdjust="spacingAndGlyphs" >100</text>
<text x="1469.6" y="765.8" font-size="21" fill="#000" font-family="'DejaVu Sans Condensed', 'DejaVu Sans', 'Liberation Sans', sans-serif" font-weight="bold" textLength="24.4" lengthAdjust="spacingAndGlyphs" >80</text>
<text x="1469.6" y="814.5" font-size="21" fill="#000" font-family="'DejaVu Sans Condensed', 'DejaVu Sans', 'Liberation Sans', sans-serif" font-weight="bold" textLength="24.4" lengthAdjust="spacingAndGlyphs" >60</text>
<text x="1469.6" y="863.2" font-size="21" fill="#000" font-family="'DejaVu Sans Condensed', 'DejaVu Sans', 'Liberation Sans', sans-serif" font-weight="bold" textLength="24.4" lengthAdjust="spacingAndGlyphs" >40</text>
<text x="1469.6" y="911.9" font-size="21" fill="#000" font-family="'DejaVu Sans Condensed', 'DejaVu Sans', 'Liberation Sans', sans-serif" font-weight="bold" textLength="24.4" lengthAdjust="spacingAndGlyphs" >20</text>
<rect x="1475.7" y="951.2" width="7" height="3.2" fill="#000" />
<path d="M1518.8 953.8 L1518.8 940.3 L1540.4 927.0 L1561.9 913.8 L1583.5 900.5 L1605.1 887.3 L1626.7 874.0 L1648.2 874.0 L1669.8 874.0 L1691.4 874.0 L1713.0 874.0 L1734.5 874.0 L1756.1 874.0 L1777.7 827.0 L1799.2 827.0 L1820.8 827.0 L1842.4 827.0 L1864.0 827.0 L1885.5 827.0 L1907.1 827.0 L1928.7 827.0 L1950.3 827.0 L1971.8 827.0 L1993.4 827.0 L2015.0 827.0 L2036.5 776.0 L2058.1 776.0 L2079.7 776.0 L2101.3 776.0 L2122.8 776.0 L2144.4 776.0 L2166.0 776.0 L2187.6 776.0 L2209.1 776.0 L2230.7 776.0 L2252.3 776.0 L2273.9 776.0 L2295.4 719.0 L2317.0 719.0 L2338.6 719.0 L2360.1 719.0 L2381.7 719.0 L2403.3 719.0 L2424.9 719.0 L2446.4 719.0 L2468.0 719.0 L2489.6 719.0 L2511.2 719.0 L2532.7 719.0 L2554.3 657.0 L2575.9 657.0 L2597.4 657.0 L2619.0 657.0 L2640.6 657.0 L2662.2 657.0 L2683.7 657.0 L2705.3 657.0 L2726.9 657.0 L2748.5 657.0 L2770.0 657.0 L2791.6 657.0 L2791.6 953.8 Z" fill="#f07d71" />
<path d="M1518.8 953.8 L1518.8 942.0 L1540.4 931.6 L1561.9 921.2 L1583.5 910.8 L1605.1 900.4 L1626.7 890.0 L1648.2 890.0 L1669.8 890.0 L1691.4 890.0 L1713.0 890.0 L1734.5 890.0 L1756.1 890.0 L1777.7 852.0 L1799.2 852.0 L1820.8 852.0 L1842.4 852.0 L1864.0 852.0 L1885.5 852.0 L1907.1 852.0 L1928.7 852.0 L1950.3 852.0 L1971.8 852.0 L1993.4 852.0 L2015.0 852.0 L2036.5 809.0 L2058.1 809.0 L2079.7 809.0 L2101.3 809.0 L2122.8 809.0 L2144.4 809.0 L2166.0 809.0 L2187.6 809.0 L2209.1 809.0 L2230.7 809.0 L2252.3 809.0 L2273.9 809.0 L2295.4 763.5 L2317.0 763.5 L2338.6 763.5 L2360.1 763.5 L2381.7 763.5 L2403.3 763.5 L2424.9 763.5 L2446.4 763.5 L2468.0 763.5 L2489.6 763.5 L2511.2 763.5 L2532.7 763.5 L2554.3 713.0 L2575.9 713.0 L2597.4 713.0 L2619.0 713.0 L2640.6 713.0 L2662.2 713.0 L2683.7 713.0 L2705.3 713.0 L2726.9 713.0 L2748.5 713.0 L2770.0 713.0 L2791.6 713.0 L2791.6 953.8 Z" fill="#4d50d3" />
<path d="M1518.8 953.8 L1518.8 948.4 L1540.4 943.3 L1561.9 938.2 L1583.5 933.2 L1605.1 928.1 L1626.7 923.0 L1648.2 923.0 L1669.8 923.0 L1691.4 923.0 L1713.0 923.0 L1734.5 923.0 L1756.1 923.0 L1777.7 905.0 L1799.2 905.0 L1820.8 905.0 L1842.4 905.0 L1864.0 905.0 L1885.5 905.0 L1907.1 905.0 L1928.7 905.0 L1950.3 905.0 L1971.8 905.0 L1993.4 905.0 L2015.0 905.0 L2036.5 884.5 L2058.1 884.5 L2079.7 884.5 L2101.3 884.5 L2122.8 884.5 L2144.4 884.5 L2166.0 884.5 L2187.6 884.5 L2209.1 884.5 L2230.7 884.5 L2252.3 884.5 L2273.9 884.5 L2295.4 862.0 L2317.0 862.0 L2338.6 862.0 L2360.1 862.0 L2381.7 862.0 L2403.3 862.0 L2424.9 862.0 L2446.4 862.0 L2468.0 862.0 L2489.6 862.0 L2511.2 862.0 L2532.7 862.0 L2554.3 838.0 L2575.9 838.0 L2597.4 838.0 L2619.0 838.0 L2640.6 838.0 L2662.2 838.0 L2683.7 838.0 L2705.3 838.0 L2726.9 838.0 L2748.5 838.0 L2770.0 838.0 L2791.6 838.0 L2791.6 953.8 Z" fill="#4ab3e8" />
<text x="-56.49" y="0" font-size="19.8" fill="#000" font-family="'DejaVu Sans Condensed', 'DejaVu Sans', 'Liberation Sans', sans-serif" textLength="56.49" lengthAdjust="spacingAndGlyphs" transform="translate(1524.8,978.6) rotate(-45)">Jan-26</text>
<text x="-61.37" y="0" font-size="19.8" fill="#000" font-family="'DejaVu Sans Condensed', 'DejaVu Sans', 'Liberation Sans', sans-serif" textLength="61.37" lengthAdjust="spacingAndGlyphs" transform="translate(1567.9,978.6) rotate(-45)">Mar-26</text>
<text x="-65.51" y="0" font-size="19.8" fill="#000" font-family="'DejaVu Sans Condensed', 'DejaVu Sans', 'Liberation Sans', sans-serif" textLength="65.51" lengthAdjust="spacingAndGlyphs" transform="translate(1611.1,978.6) rotate(-45)">May-26</text>
<text x="-50.53" y="0" font-size="19.8" fill="#000" font-family="'DejaVu Sans Condensed', 'DejaVu Sans', 'Liberation Sans', sans-serif" textLength="50.53" lengthAdjust="spacingAndGlyphs" transform="translate(1654.2,978.6) rotate(-45)">Jul-26</text>
<text x="-62.62" y="0" font-size="19.8" fill="#000" font-family="'DejaVu Sans Condensed', 'DejaVu Sans', 'Liberation Sans', sans-serif" textLength="62.62" lengthAdjust="spacingAndGlyphs" transform="translate(1697.4,978.6) rotate(-45)">Sep-26</text>
<text x="-63.26" y="0" font-size="19.8" fill="#000" font-family="'DejaVu Sans Condensed', 'DejaVu Sans', 'Liberation Sans', sans-serif" textLength="63.26" lengthAdjust="spacingAndGlyphs" transform="translate(1740.5,978.6) rotate(-45)">Nov-26</text>
<text x="-56.49" y="0" font-size="19.8" fill="#000" font-family="'DejaVu Sans Condensed', 'DejaVu Sans', 'Liberation Sans', sans-serif" textLength="56.49" lengthAdjust="spacingAndGlyphs" transform="translate(1783.7,978.6) rotate(-45)">Jan-27</text>
<text x="-61.37" y="0" font-size="19.8" fill="#000" font-family="'DejaVu Sans Condensed', 'DejaVu Sans', 'Liberation Sans', sans-serif" textLength="61.37" lengthAdjust="spacingAndGlyphs" transform="translate(1826.8,978.6) rotate(-45)">Mar-27</text>
<text x="-65.51" y="0" font-size="19.8" fill="#000" font-family="'DejaVu Sans Condensed', 'DejaVu Sans', 'Liberation Sans', sans-serif" textLength="65.51" lengthAdjust="spacingAndGlyphs" transform="translate(1870.0,978.6) rotate(-45)">May-27</text>
<text x="-50.53" y="0" font-size="19.8" fill="#000" font-family="'DejaVu Sans Condensed', 'DejaVu Sans', 'Liberation Sans', sans-serif" textLength="50.53" lengthAdjust="spacingAndGlyphs" transform="translate(1913.1,978.6) rotate(-45)">Jul-27</text>
<text x="-62.62" y="0" font-size="19.8" fill="#000" font-family="'DejaVu Sans Condensed', 'DejaVu Sans', 'Liberation Sans', sans-serif" textLength="62.62" lengthAdjust="spacingAndGlyphs" transform="translate(1956.3,978.6) rotate(-45)">Sep-27</text>
<text x="-63.26" y="0" font-size="19.8" fill="#000" font-family="'DejaVu Sans Condensed', 'DejaVu Sans', 'Liberation Sans', sans-serif" textLength="63.26" lengthAdjust="spacingAndGlyphs" transform="translate(1999.4,978.6) rotate(-45)">Nov-27</text>
<text x="-56.49" y="0" font-size="19.8" fill="#000" font-family="'DejaVu Sans Condensed', 'DejaVu Sans', 'Liberation Sans', sans-serif" textLength="56.49" lengthAdjust="spacingAndGlyphs" transform="translate(2042.5,978.6) rotate(-45)">Jan-28</text>
<text x="-61.37" y="0" font-size="19.8" fill="#000" font-family="'DejaVu Sans Condensed', 'DejaVu Sans', 'Liberation Sans', sans-serif" textLength="61.37" lengthAdjust="spacingAndGlyphs" transform="translate(2085.7,978.6) rotate(-45)">Mar-28</text>
<text x="-65.51" y="0" font-size="19.8" fill="#000" font-family="'DejaVu Sans Condensed', 'DejaVu Sans', 'Liberation Sans', sans-serif" textLength="65.51" lengthAdjust="spacingAndGlyphs" transform="translate(2128.8,978.6) rotate(-45)">May-28</text>
<text x="-50.53" y="0" font-size="19.8" fill="#000" font-family="'DejaVu Sans Condensed', 'DejaVu Sans', 'Liberation Sans', sans-serif" textLength="50.53" lengthAdjust="spacingAndGlyphs" transform="translate(2172.0,978.6) rotate(-45)">Jul-28</text>
<text x="-62.62" y="0" font-size="19.8" fill="#000" font-family="'DejaVu Sans Condensed', 'DejaVu Sans', 'Liberation Sans', sans-serif" textLength="62.62" lengthAdjust="spacingAndGlyphs" transform="translate(2215.1,978.6) rotate(-45)">Sep-28</text>
<text x="-63.26" y="0" font-size="19.8" fill="#000" font-family="'DejaVu Sans Condensed', 'DejaVu Sans', 'Liberation Sans', sans-serif" textLength="63.26" lengthAdjust="spacingAndGlyphs" transform="translate(2258.3,978.6) rotate(-45)">Nov-28</text>
<text x="-56.49" y="0" font-size="19.8" fill="#000" font-family="'DejaVu Sans Condensed', 'DejaVu Sans', 'Liberation Sans', sans-serif" textLength="56.49" lengthAdjust="spacingAndGlyphs" transform="translate(2301.4,978.6) rotate(-45)">Jan-29</text>
<text x="-61.37" y="0" font-size="19.8" fill="#000" font-family="'DejaVu Sans Condensed', 'DejaVu Sans', 'Liberation Sans', sans-serif" textLength="61.37" lengthAdjust="spacingAndGlyphs" transform="translate(2344.6,978.6) rotate(-45)">Mar-29</text>
<text x="-65.51" y="0" font-size="19.8" fill="#000" font-family="'DejaVu Sans Condensed', 'DejaVu Sans', 'Liberation Sans', sans-serif" textLength="65.51" lengthAdjust="spacingAndGlyphs" transform="translate(2387.7,978.6) rotate(-45)">May-29</text>
<text x="-50.53" y="0" font-size="19.8" fill="#000" font-family="'DejaVu Sans Condensed', 'DejaVu Sans', 'Liberation Sans', sans-serif" textLength="50.53" lengthAdjust="spacingAndGlyphs" transform="translate(2430.9,978.6) rotate(-45)">Jul-29</text>
<text x="-62.62" y="0" font-size="19.8" fill="#000" font-family="'DejaVu Sans Condensed', 'DejaVu Sans', 'Liberation Sans', sans-serif" textLength="62.62" lengthAdjust="spacingAndGlyphs" transform="translate(2474.0,978.6) rotate(-45)">Sep-29</text>
<text x="-63.26" y="0" font-size="19.8" fill="#000" font-family="'DejaVu Sans Condensed', 'DejaVu Sans', 'Liberation Sans', sans-serif" textLength="63.26" lengthAdjust="spacingAndGlyphs" transform="translate(2517.2,978.6) rotate(-45)">Nov-29</text>
<text x="-56.49" y="0" font-size="19.8" fill="#000" font-family="'DejaVu Sans Condensed', 'DejaVu Sans', 'Liberation Sans', sans-serif" textLength="56.49" lengthAdjust="spacingAndGlyphs" transform="translate(2560.3,978.6) rotate(-45)">Jan-30</text>
<text x="-61.37" y="0" font-size="19.8" fill="#000" font-family="'DejaVu Sans Condensed', 'DejaVu Sans', 'Liberation Sans', sans-serif" textLength="61.37" lengthAdjust="spacingAndGlyphs" transform="translate(2603.4,978.6) rotate(-45)">Mar-30</text>
<text x="-65.51" y="0" font-size="19.8" fill="#000" font-family="'DejaVu Sans Condensed', 'DejaVu Sans', 'Liberation Sans', sans-serif" textLength="65.51" lengthAdjust="spacingAndGlyphs" transform="translate(2646.6,978.6) rotate(-45)">May-30</text>
<text x="-50.53" y="0" font-size="19.8" fill="#000" font-family="'DejaVu Sans Condensed', 'DejaVu Sans', 'Liberation Sans', sans-serif" textLength="50.53" lengthAdjust="spacingAndGlyphs" transform="translate(2689.7,978.6) rotate(-45)">Jul-30</text>
<text x="-62.62" y="0" font-size="19.8" fill="#000" font-family="'DejaVu Sans Condensed', 'DejaVu Sans', 'Liberation Sans', sans-serif" textLength="62.62" lengthAdjust="spacingAndGlyphs" transform="translate(2732.9,978.6) rotate(-45)">Sep-30</text>
<text x="-63.26" y="0" font-size="19.8" fill="#000" font-family="'DejaVu Sans Condensed', 'DejaVu Sans', 'Liberation Sans', sans-serif" textLength="63.26" lengthAdjust="spacingAndGlyphs" transform="translate(2776.0,978.6) rotate(-45)">Nov-30</text>
<text x="1907" y="1094.6" font-size="35.5" fill="#000" font-family="'DejaVu Sans Condensed', 'DejaVu Sans', 'Liberation Sans', sans-serif" font-weight="bold" textLength="415" lengthAdjust="spacingAndGlyphs" stroke="#000" stroke-width="0.7">CASH BALANCE - $'000</text>
<line x1="1530" y1="1147.5" x2="2792" y2="1147.5" stroke="#6fb0d6" stroke-width="1" />
<line x1="1530" y1="1228.5" x2="2792" y2="1228.5" stroke="#6fb0d6" stroke-width="1" />
<line x1="1530" y1="1310.5" x2="2792" y2="1310.5" stroke="#6fb0d6" stroke-width="1" />
<line x1="1530" y1="1392.5" x2="2792" y2="1392.5" stroke="#6fb0d6" stroke-width="1" />
<line x1="1530" y1="1474.5" x2="2792" y2="1474.5" stroke="#6fb0d6" stroke-width="1" />
<text x="1450.4" y="1154.1" font-size="21" fill="#000" font-family="'DejaVu Sans Condensed', 'DejaVu Sans', 'Liberation Sans', sans-serif" font-weight="bold" textLength="55.1" lengthAdjust="spacingAndGlyphs" >2,500</text>
<text x="1450.4" y="1235.6" font-size="21" fill="#000" font-family="'DejaVu Sans Condensed', 'DejaVu Sans', 'Liberation Sans', sans-serif" font-weight="bold" textLength="55.1" lengthAdjust="spacingAndGlyphs" >2,000</text>
<text x="1450.4" y="1317.6" font-size="21" fill="#000" font-family="'DejaVu Sans Condensed', 'DejaVu Sans', 'Liberation Sans', sans-serif" font-weight="bold" textLength="55.1" lengthAdjust="spacingAndGlyphs" >1,500</text>
<text x="1450.4" y="1399.4" font-size="21" fill="#000" font-family="'DejaVu Sans Condensed', 'DejaVu Sans', 'Liberation Sans', sans-serif" font-weight="bold" textLength="55.1" lengthAdjust="spacingAndGlyphs" >1,000</text>
<text x="1468.9" y="1481.1" font-size="21" fill="#000" font-family="'DejaVu Sans Condensed', 'DejaVu Sans', 'Liberation Sans', sans-serif" font-weight="bold" textLength="36.6" lengthAdjust="spacingAndGlyphs" >500</text>
<rect x="1487.2" y="1552.7" width="7" height="3.2" fill="#000" />
<path d="M1530.3 1555.0 L1530.3 1412.2 L1551.7 1418.4 L1573.1 1404.9 L1594.5 1405.8 L1615.8 1406.0 L1637.2 1406.0 L1658.6 1405.3 L1680.0 1404.3 L1701.4 1403.3 L1722.8 1402.3 L1744.1 1401.3 L1765.5 1400.3 L1786.9 1399.3 L1808.3 1397.6 L1829.7 1396.0 L1851.1 1394.3 L1872.5 1392.9 L1893.8 1391.4 L1915.2 1390.0 L1936.6 1388.1 L1958.0 1386.2 L1979.4 1384.3 L2000.8 1382.2 L2022.1 1380.1 L2043.5 1378.0 L2064.9 1375.3 L2086.3 1372.7 L2107.7 1370.0 L2129.1 1367.0 L2150.5 1364.0 L2171.8 1361.0 L2193.2 1358.1 L2214.6 1355.2 L2236.0 1352.3 L2257.4 1349.7 L2278.8 1347.1 L2300.2 1344.5 L2321.5 1339.0 L2342.9 1333.5 L2364.3 1328.0 L2385.7 1323.0 L2407.1 1318.0 L2428.5 1313.0 L2449.8 1308.3 L2471.2 1303.7 L2492.6 1299.0 L2514.0 1294.0 L2535.4 1289.0 L2556.8 1284.0 L2578.2 1276.5 L2599.5 1268.8 L2620.9 1261.0 L2642.3 1253.0 L2663.7 1245.0 L2685.1 1237.0 L2706.5 1229.3 L2727.8 1221.7 L2749.2 1214.0 L2770.6 1206.5 L2792.0 1199.0 L2792.0 1555.0 Z" fill="#4ab3e8" />
<line x1="1529.5" y1="1555" x2="2793" y2="1555" stroke="#4472c4" stroke-width="1.8" />
<line x1="1530.3" y1="1555" x2="1530.3" y2="1562" stroke="#4472c4" stroke-width="1.6" />
<line x1="1551.68" y1="1555" x2="1551.68" y2="1559.5" stroke="#4472c4" stroke-width="1.3" />
<line x1="1573.07" y1="1555" x2="1573.07" y2="1559.5" stroke="#4472c4" stroke-width="1.3" />
<line x1="1594.45" y1="1555" x2="1594.45" y2="1562" stroke="#4472c4" stroke-width="1.6" />
<line x1="1615.84" y1="1555" x2="1615.84" y2="1559.5" stroke="#4472c4" stroke-width="1.3" />
<line x1="1637.22" y1="1555" x2="1637.22" y2="1559.5" stroke="#4472c4" stroke-width="1.3" />
<line x1="1658.61" y1="1555" x2="1658.61" y2="1562" stroke="#4472c4" stroke-width="1.6" />
<line x1="1679.99" y1="1555" x2="1679.99" y2="1559.5" stroke="#4472c4" stroke-width="1.3" />
<line x1="1701.38" y1="1555" x2="1701.38" y2="1559.5" stroke="#4472c4" stroke-width="1.3" />
<line x1="1722.76" y1="1555" x2="1722.76" y2="1562" stroke="#4472c4" stroke-width="1.6" />
<line x1="1744.15" y1="1555" x2="1744.15" y2="1559.5" stroke="#4472c4" stroke-width="1.3" />
<line x1="1765.53" y1="1555" x2="1765.53" y2="1559.5" stroke="#4472c4" stroke-width="1.3" />
<line x1="1786.92" y1="1555" x2="1786.92" y2="1562" stroke="#4472c4" stroke-width="1.6" />
<line x1="1808.3" y1="1555" x2="1808.3" y2="1559.5" stroke="#4472c4" stroke-width="1.3" />
<line x1="1829.69" y1="1555" x2="1829.69" y2="1559.5" stroke="#4472c4" stroke-width="1.3" />
<line x1="1851.07" y1="1555" x2="1851.07" y2="1562" stroke="#4472c4" stroke-width="1.6" />
<line x1="1872.46" y1="1555" x2="1872.46" y2="1559.5" stroke="#4472c4" stroke-width="1.3" />
<line x1="1893.84" y1="1555" x2="1893.84" y2="1559.5" stroke="#4472c4" stroke-width="1.3" />
<line x1="1915.23" y1="1555" x2="1915.23" y2="1562" stroke="#4472c4" stroke-width="1.6" />
<line x1="1936.61" y1="1555" x2="1936.61" y2="1559.5" stroke="#4472c4" stroke-width="1.3" />
<line x1="1957.99" y1="1555" x2="1957.99" y2="1559.5" stroke="#4472c4" stroke-width="1.3" />
<line x1="1979.38" y1="1555" x2="1979.38" y2="1562" stroke="#4472c4" stroke-width="1.6" />
<line x1="2000.76" y1="1555" x2="2000.76" y2="1559.5" stroke="#4472c4" stroke-width="1.3" />
<line x1="2022.15" y1="1555" x2="2022.15" y2="1559.5" stroke="#4472c4" stroke-width="1.3" />
<line x1="2043.53" y1="1555" x2="2043.53" y2="1562" stroke="#4472c4" stroke-width="1.6" />
<line x1="2064.92" y1="1555" x2="2064.92" y2="1559.5" stroke="#4472c4" stroke-width="1.3" />
<line x1="2086.3" y1="1555" x2="2086.3" y2="1559.5" stroke="#4472c4" stroke-width="1.3" />
<line x1="2107.69" y1="1555" x2="2107.69" y2="1562" stroke="#4472c4" stroke-width="1.6" />
<line x1="2129.07" y1="1555" x2="2129.07" y2="1559.5" stroke="#4472c4" stroke-width="1.3" />
<line x1="2150.46" y1="1555" x2="2150.46" y2="1559.5" stroke="#4472c4" stroke-width="1.3" />
<line x1="2171.84" y1="1555" x2="2171.84" y2="1562" stroke="#4472c4" stroke-width="1.6" />
<line x1="2193.23" y1="1555" x2="2193.23" y2="1559.5" stroke="#4472c4" stroke-width="1.3" />
<line x1="2214.61" y1="1555" x2="2214.61" y2="1559.5" stroke="#4472c4" stroke-width="1.3" />
<line x1="2236" y1="1555" x2="2236" y2="1562" stroke="#4472c4" stroke-width="1.6" />
<line x1="2257.38" y1="1555" x2="2257.38" y2="1559.5" stroke="#4472c4" stroke-width="1.3" />
<line x1="2278.77" y1="1555" x2="2278.77" y2="1559.5" stroke="#4472c4" stroke-width="1.3" />
<line x1="2300.15" y1="1555" x2="2300.15" y2="1562" stroke="#4472c4" stroke-width="1.6" />
<line x1="2321.54" y1="1555" x2="2321.54" y2="1559.5" stroke="#4472c4" stroke-width="1.3" />
<line x1="2342.92" y1="1555" x2="2342.92" y2="1559.5" stroke="#4472c4" stroke-width="1.3" />
<line x1="2364.31" y1="1555" x2="2364.31" y2="1562" stroke="#4472c4" stroke-width="1.6" />
<line x1="2385.69" y1="1555" x2="2385.69" y2="1559.5" stroke="#4472c4" stroke-width="1.3" />
<line x1="2407.07" y1="1555" x2="2407.07" y2="1559.5" stroke="#4472c4" stroke-width="1.3" />
<line x1="2428.46" y1="1555" x2="2428.46" y2="1562" stroke="#4472c4" stroke-width="1.6" />
<line x1="2449.84" y1="1555" x2="2449.84" y2="1559.5" stroke="#4472c4" stroke-width="1.3" />
<line x1="2471.23" y1="1555" x2="2471.23" y2="1559.5" stroke="#4472c4" stroke-width="1.3" />
<line x1="2492.61" y1="1555" x2="2492.61" y2="1562" stroke="#4472c4" stroke-width="1.6" />
<line x1="2514" y1="1555" x2="2514" y2="1559.5" stroke="#4472c4" stroke-width="1.3" />
<line x1="2535.38" y1="1555" x2="2535.38" y2="1559.5" stroke="#4472c4" stroke-width="1.3" />
<line x1="2556.77" y1="1555" x2="2556.77" y2="1562" stroke="#4472c4" stroke-width="1.6" />
<line x1="2578.15" y1="1555" x2="2578.15" y2="1559.5" stroke="#4472c4" stroke-width="1.3" />
<line x1="2599.54" y1="1555" x2="2599.54" y2="1559.5" stroke="#4472c4" stroke-width="1.3" />
<line x1="2620.92" y1="1555" x2="2620.92" y2="1562" stroke="#4472c4" stroke-width="1.6" />
<line x1="2642.31" y1="1555" x2="2642.31" y2="1559.5" stroke="#4472c4" stroke-width="1.3" />
<line x1="2663.69" y1="1555" x2="2663.69" y2="1559.5" stroke="#4472c4" stroke-width="1.3" />
<line x1="2685.08" y1="1555" x2="2685.08" y2="1562" stroke="#4472c4" stroke-width="1.6" />
<line x1="2706.46" y1="1555" x2="2706.46" y2="1559.5" stroke="#4472c4" stroke-width="1.3" />
<line x1="2727.85" y1="1555" x2="2727.85" y2="1559.5" stroke="#4472c4" stroke-width="1.3" />
<line x1="2749.23" y1="1555" x2="2749.23" y2="1562" stroke="#4472c4" stroke-width="1.6" />
<line x1="2770.62" y1="1555" x2="2770.62" y2="1559.5" stroke="#4472c4" stroke-width="1.3" />
<line x1="2792" y1="1555" x2="2792" y2="1559.5" stroke="#4472c4" stroke-width="1.3" />
<line x1="2792.3" y1="1555" x2="2792.3" y2="1562" stroke="#4472c4" stroke-width="1.6" />
<text x="-56.49" y="0" font-size="19.8" fill="#000" font-family="'DejaVu Sans Condensed', 'DejaVu Sans', 'Liberation Sans', sans-serif" textLength="56.49" lengthAdjust="spacingAndGlyphs" transform="translate(1536.6,1583.5) rotate(-45)">Jan-26</text>
<text x="-58.58" y="0" font-size="19.8" fill="#000" font-family="'DejaVu Sans Condensed', 'DejaVu Sans', 'Liberation Sans', sans-serif" textLength="58.58" lengthAdjust="spacingAndGlyphs" transform="translate(1600.8,1583.5) rotate(-45)">Apr-26</text>
<text x="-50.53" y="0" font-size="19.8" fill="#000" font-family="'DejaVu Sans Condensed', 'DejaVu Sans', 'Liberation Sans', sans-serif" textLength="50.53" lengthAdjust="spacingAndGlyphs" transform="translate(1664.9,1583.5) rotate(-45)">Jul-26</text>
<text x="-59.83" y="0" font-size="19.8" fill="#000" font-family="'DejaVu Sans Condensed', 'DejaVu Sans', 'Liberation Sans', sans-serif" textLength="59.83" lengthAdjust="spacingAndGlyphs" transform="translate(1729.1,1583.5) rotate(-45)">Oct-26</text>
<text x="-56.49" y="0" font-size="19.8" fill="#000" font-family="'DejaVu Sans Condensed', 'DejaVu Sans', 'Liberation Sans', sans-serif" textLength="56.49" lengthAdjust="spacingAndGlyphs" transform="translate(1793.2,1583.5) rotate(-45)">Jan-27</text>
<text x="-58.58" y="0" font-size="19.8" fill="#000" font-family="'DejaVu Sans Condensed', 'DejaVu Sans', 'Liberation Sans', sans-serif" textLength="58.58" lengthAdjust="spacingAndGlyphs" transform="translate(1857.4,1583.5) rotate(-45)">Apr-27</text>
<text x="-50.53" y="0" font-size="19.8" fill="#000" font-family="'DejaVu Sans Condensed', 'DejaVu Sans', 'Liberation Sans', sans-serif" textLength="50.53" lengthAdjust="spacingAndGlyphs" transform="translate(1921.5,1583.5) rotate(-45)">Jul-27</text>
<text x="-59.83" y="0" font-size="19.8" fill="#000" font-family="'DejaVu Sans Condensed', 'DejaVu Sans', 'Liberation Sans', sans-serif" textLength="59.83" lengthAdjust="spacingAndGlyphs" transform="translate(1985.7,1583.5) rotate(-45)">Oct-27</text>
<text x="-56.49" y="0" font-size="19.8" fill="#000" font-family="'DejaVu Sans Condensed', 'DejaVu Sans', 'Liberation Sans', sans-serif" textLength="56.49" lengthAdjust="spacingAndGlyphs" transform="translate(2049.8,1583.5) rotate(-45)">Jan-28</text>
<text x="-58.58" y="0" font-size="19.8" fill="#000" font-family="'DejaVu Sans Condensed', 'DejaVu Sans', 'Liberation Sans', sans-serif" textLength="58.58" lengthAdjust="spacingAndGlyphs" transform="translate(2114.0,1583.5) rotate(-45)">Apr-28</text>
<text x="-50.53" y="0" font-size="19.8" fill="#000" font-family="'DejaVu Sans Condensed', 'DejaVu Sans', 'Liberation Sans', sans-serif" textLength="50.53" lengthAdjust="spacingAndGlyphs" transform="translate(2178.1,1583.5) rotate(-45)">Jul-28</text>
<text x="-59.83" y="0" font-size="19.8" fill="#000" font-family="'DejaVu Sans Condensed', 'DejaVu Sans', 'Liberation Sans', sans-serif" textLength="59.83" lengthAdjust="spacingAndGlyphs" transform="translate(2242.3,1583.5) rotate(-45)">Oct-28</text>
<text x="-56.49" y="0" font-size="19.8" fill="#000" font-family="'DejaVu Sans Condensed', 'DejaVu Sans', 'Liberation Sans', sans-serif" textLength="56.49" lengthAdjust="spacingAndGlyphs" transform="translate(2306.5,1583.5) rotate(-45)">Jan-29</text>
<text x="-58.58" y="0" font-size="19.8" fill="#000" font-family="'DejaVu Sans Condensed', 'DejaVu Sans', 'Liberation Sans', sans-serif" textLength="58.58" lengthAdjust="spacingAndGlyphs" transform="translate(2370.6,1583.5) rotate(-45)">Apr-29</text>
<text x="-50.53" y="0" font-size="19.8" fill="#000" font-family="'DejaVu Sans Condensed', 'DejaVu Sans', 'Liberation Sans', sans-serif" textLength="50.53" lengthAdjust="spacingAndGlyphs" transform="translate(2434.8,1583.5) rotate(-45)">Jul-29</text>
<text x="-59.83" y="0" font-size="19.8" fill="#000" font-family="'DejaVu Sans Condensed', 'DejaVu Sans', 'Liberation Sans', sans-serif" textLength="59.83" lengthAdjust="spacingAndGlyphs" transform="translate(2498.9,1583.5) rotate(-45)">Oct-29</text>
<text x="-56.49" y="0" font-size="19.8" fill="#000" font-family="'DejaVu Sans Condensed', 'DejaVu Sans', 'Liberation Sans', sans-serif" textLength="56.49" lengthAdjust="spacingAndGlyphs" transform="translate(2563.1,1583.5) rotate(-45)">Jan-30</text>
<text x="-58.58" y="0" font-size="19.8" fill="#000" font-family="'DejaVu Sans Condensed', 'DejaVu Sans', 'Liberation Sans', sans-serif" textLength="58.58" lengthAdjust="spacingAndGlyphs" transform="translate(2627.2,1583.5) rotate(-45)">Apr-30</text>
<text x="-50.53" y="0" font-size="19.8" fill="#000" font-family="'DejaVu Sans Condensed', 'DejaVu Sans', 'Liberation Sans', sans-serif" textLength="50.53" lengthAdjust="spacingAndGlyphs" transform="translate(2691.4,1583.5) rotate(-45)">Jul-30</text>
<text x="-59.83" y="0" font-size="19.8" fill="#000" font-family="'DejaVu Sans Condensed', 'DejaVu Sans', 'Liberation Sans', sans-serif" textLength="59.83" lengthAdjust="spacingAndGlyphs" transform="translate(2755.5,1583.5) rotate(-45)">Oct-30</text>
<defs><clipPath id="sheetclip"><rect x="47" y="300" width="2813.400" height="1370"/></clipPath></defs>
<g clip-path="url(#sheetclip)">
<text x="1828" y="1693.6" font-size="35.5" fill="#000" font-family="'DejaVu Sans Condensed', 'DejaVu Sans', 'Liberation Sans', sans-serif" font-weight="bold" textLength="555" lengthAdjust="spacingAndGlyphs" >OPERATING CASH FLOW - $'000</text>
<text x="349" y="1695.6" font-size="35.5" fill="#000" font-family="'DejaVu Sans Condensed', 'DejaVu Sans', 'Liberation Sans', sans-serif" font-weight="bold" textLength="555" lengthAdjust="spacingAndGlyphs" >OPERATING CASH FLOW - $'000</text>
</g>
<rect x="2860.4" y="278" width="30.6" height="1392" fill="#0a0a0a" />
<rect x="2862.5" y="280" width="26" height="1392" fill="#161616" rx="13" />
<path d="M2869 295.500 L2876 285.500 L2883 295.500z" fill="#9d9d9d" stroke="#9d9d9d" stroke-width="1" stroke-linejoin="round"/>
<rect x="2869.8" y="304" width="12.2" height="661" fill="#9d9d9d" rx="6" />
<path d="M2869 1654.500 L2876 1664.500 L2883 1654.500z" fill="#9d9d9d" stroke="#9d9d9d" stroke-width="1" stroke-linejoin="round"/>
<rect x="11" y="1670.3" width="2880" height="48" fill="#0a0a0a" />
<path d="M53 1685.500 l-6 7.500 l6 7.500" fill="none" stroke="#8a8a8a" stroke-width="1.8" stroke-linecap="round" stroke-linejoin="round"/>
<path d="M96 1685.500 l6 7.500 l-6 7.500" fill="none" stroke="#e0e0e0" stroke-width="1.8" stroke-linecap="round" stroke-linejoin="round"/>
<text x="190.4" y="1702.7" font-size="20.5" fill="#fff" font-family="'Liberation Sans', sans-serif" textLength="82.3" lengthAdjust="spacingAndGlyphs" >Contents</text>
<line x1="292.5" y1="1680.5" x2="292.5" y2="1707.5" stroke="#4a4a4a" stroke-width="1.3" />
<rect x="299" y="1676.3" width="128" height="35.5" fill="#fdee6b" rx="5" />
<text x="314" y="1702.7" font-size="20.5" fill="#1a1a1a" font-family="'Liberation Sans', sans-serif" textLength="99" lengthAdjust="spacingAndGlyphs" >Dashboard</text>
<line x1="433.5" y1="1680.5" x2="433.5" y2="1707.5" stroke="#4a4a4a" stroke-width="1.3" />
<rect x="440" y="1676.3" width="106" height="35.5" fill="#fdee6b" rx="5" />
<text x="454.5" y="1702.7" font-size="20.5" fill="#1a1a1a" font-family="'Liberation Sans', sans-serif" textLength="78" lengthAdjust="spacingAndGlyphs" >Revenue</text>
<line x1="552.5" y1="1680.5" x2="552.5" y2="1707.5" stroke="#4a4a4a" stroke-width="1.3" />
<rect x="559" y="1676.3" width="158" height="35.5" fill="#fdee6b" rx="5" />
<text x="572" y="1702.7" font-size="20.5" fill="#1a1a1a" font-family="'Liberation Sans', sans-serif" textLength="133" lengthAdjust="spacingAndGlyphs" >COGS &amp; OPEX</text>
<line x1="723.5" y1="1680.5" x2="723.5" y2="1707.5" stroke="#4a4a4a" stroke-width="1.3" />
<rect x="730" y="1676.3" width="89" height="35.5" fill="#fdee6b" rx="5" />
<text x="743.5" y="1702.7" font-size="20.5" fill="#1a1a1a" font-family="'Liberation Sans', sans-serif" textLength="61.5" lengthAdjust="spacingAndGlyphs" >Payroll</text>
<line x1="825.5" y1="1680.5" x2="825.5" y2="1707.5" stroke="#4a4a4a" stroke-width="1.3" />
<rect x="832" y="1676.3" width="87" height="35.5" fill="#fdee6b" rx="5" />
<text x="845" y="1702.7" font-size="20.5" fill="#1a1a1a" font-family="'Liberation Sans', sans-serif" textLength="61" lengthAdjust="spacingAndGlyphs" >CAPEX</text>
<line x1="925.5" y1="1680.5" x2="925.5" y2="1707.5" stroke="#4a4a4a" stroke-width="1.3" />
<rect x="932" y="1676.3" width="113" height="35.5" fill="#fdee6b" rx="5" />
<text x="945" y="1702.7" font-size="20.5" fill="#1a1a1a" font-family="'Liberation Sans', sans-serif" textLength="86" lengthAdjust="spacingAndGlyphs" >CapTable</text>
<line x1="1051.5" y1="1680.5" x2="1051.5" y2="1707.5" stroke="#4a4a4a" stroke-width="1.3" />
<rect x="1058" y="1676.3" width="90" height="35.5" fill="#fdee6b" rx="5" />
<text x="1071" y="1702.7" font-size="20.5" fill="#1a1a1a" font-family="'Liberation Sans', sans-serif" textLength="64" lengthAdjust="spacingAndGlyphs" >Capital</text>
<line x1="1154.5" y1="1680.5" x2="1154.5" y2="1707.5" stroke="#4a4a4a" stroke-width="1.3" />
<rect x="1161" y="1676.3" width="42" height="35.5" fill="#4ab3e8" rx="5" />
<text x="1174" y="1702.7" font-size="20.5" fill="#1a1a1a" font-family="'Liberation Sans', sans-serif" textLength="17" lengthAdjust="spacingAndGlyphs" >IS</text>
<line x1="1209.5" y1="1680.5" x2="1209.5" y2="1707.5" stroke="#4a4a4a" stroke-width="1.3" />
<rect x="1216" y="1676.3" width="47.5" height="35.5" fill="#4ab3e8" rx="5" />
<text x="1229.6" y="1702.7" font-size="20.5" fill="#1a1a1a" font-family="'Liberation Sans', sans-serif" textLength="22.4" lengthAdjust="spacingAndGlyphs" >CF</text>
<line x1="1270" y1="1680.5" x2="1270" y2="1707.5" stroke="#4a4a4a" stroke-width="1.3" />
<rect x="1277" y="1676.3" width="48" height="35.5" fill="#4ab3e8" rx="5" />
<text x="1290.5" y="1702.7" font-size="20.5" fill="#1a1a1a" font-family="'Liberation Sans', sans-serif" textLength="21.5" lengthAdjust="spacingAndGlyphs" >BS</text>
<line x1="1331.5" y1="1680.5" x2="1331.5" y2="1707.5" stroke="#4a4a4a" stroke-width="1.3" />
<rect x="1338" y="1676.3" width="114.5" height="35.5" fill="#4ab3e8" rx="5" />
<text x="1351" y="1702.7" font-size="20.5" fill="#1a1a1a" font-family="'Liberation Sans', sans-serif" textLength="87.5" lengthAdjust="spacingAndGlyphs" >Scenarios</text>
<line x1="1459" y1="1680.5" x2="1459" y2="1707.5" stroke="#4a4a4a" stroke-width="1.3" />
<rect x="1466" y="1676.3" width="114.5" height="35.5" fill="#4ab3e8" rx="5" />
<text x="1479.5" y="1702.7" font-size="20.5" fill="#1a1a1a" font-family="'Liberation Sans', sans-serif" textLength="86.5" lengthAdjust="spacingAndGlyphs" >Valuation</text>
<line x1="1587" y1="1680.5" x2="1587" y2="1707.5" stroke="#4a4a4a" stroke-width="1.3" />
<rect x="1594" y="1676.3" width="113.5" height="35.5" fill="#4ab3e8" rx="5" />
<text x="1608" y="1702.7" font-size="20.5" fill="#1a1a1a" font-family="'Liberation Sans', sans-serif" textLength="87" lengthAdjust="spacingAndGlyphs" >Summary</text>
<line x1="1714" y1="1680.5" x2="1714" y2="1707.5" stroke="#4a4a4a" stroke-width="1.3" />
<rect x="1721" y="1676.3" width="47.5" height="35.5" fill="#4ab3e8" rx="5" />
<text x="1734.5" y="1702.7" font-size="20.5" fill="#1a1a1a" font-family="'Liberation Sans', sans-serif" textLength="21.5" lengthAdjust="spacingAndGlyphs" >BE</text>
<line x1="1775" y1="1680.5" x2="1775" y2="1707.5" stroke="#4a4a4a" stroke-width="1.3" />
<rect x="1782" y="1676.3" width="72" height="35.5" fill="#4ab3e8" rx="5" />
<text x="1795.5" y="1702.7" font-size="20.5" fill="#1a1a1a" font-family="'Liberation Sans', sans-serif" textLength="45.5" lengthAdjust="spacingAndGlyphs" >ROIC</text>
<line x1="1860.5" y1="1680.5" x2="1860.5" y2="1707.5" stroke="#4a4a4a" stroke-width="1.3" />
<rect x="1965" y="1676.3" width="64" height="35.5" fill="#4ab3e8" rx="5" />
<text x="1978.5" y="1702.7" font-size="20.5" fill="#1a1a1a" font-family="'Liberation Sans', sans-serif" textLength="37" lengthAdjust="spacingAndGlyphs" >KPIs</text>
<line x1="2035.5" y1="1680.5" x2="2035.5" y2="1707.5" stroke="#4a4a4a" stroke-width="1.3" />
<defs><clipPath id="sccl"><rect x="2042" y="1670" width="30" height="48"/></clipPath><linearGradient id="actg" x1="0" y1="0" x2="0" y2="1"><stop offset="0" stop-color="#ffffff"/><stop offset="0.55" stop-color="#f2f8fd"/><stop offset="1" stop-color="#c9e4f6"/></linearGradient></defs>
<g clip-path="url(#sccl)">
<rect x="2042" y="1676.3" width="110" height="35.5" fill="#4ab3e8" rx="5" />
<text x="2055" y="1702.7" font-size="20.5" fill="#1a1a1a" font-family="'Liberation Sans', sans-serif" >Scenarios</text>
</g>
<path d="M1861.500 1670.300 H1958 a5.500 5.500 0 0 0 -5.500 5.500 V1706.500 a5 5 0 0 1 -5 5 H1872 a5 5 0 0 1 -5 -5 V1675.800 a5.500 5.500 0 0 0 -5.500 -5.500z" fill="url(#actg)" />
<text x="1879.5" y="1698" font-size="20.5" fill="#1a1a1a" font-family="'Liberation Sans', sans-serif" textLength="59" lengthAdjust="spacingAndGlyphs" stroke="#1a1a1a" stroke-width="0.35">Charts</text>
<rect x="1879" y="1705.3" width="60" height="2.4" fill="#1e7b45" rx="1" />
<line x1="1959" y1="1680.5" x2="1959" y2="1707.5" stroke="#4a4a4a" stroke-width="1.3" />
<circle cx="2089.5" cy="1692.500" r="2.100" fill="#e8e8e8"/>
<circle cx="2095" cy="1692.500" r="2.100" fill="#e8e8e8"/>
<circle cx="2100.5" cy="1692.500" r="2.100" fill="#e8e8e8"/>
<path d="M2143 1684.500 v17 M2134.500 1693 h17" fill="none" stroke="#e0e0e0" stroke-width="1.6" />
<rect x="2189.700" y="1685.7" width="3.600" height="3.600" rx="0.800" fill="#e8e8e8"/>
<rect x="2189.700" y="1692.2" width="3.600" height="3.600" rx="0.800" fill="#e8e8e8"/>
<rect x="2189.700" y="1698.7" width="3.600" height="3.600" rx="0.800" fill="#e8e8e8"/>
<rect x="2215" y="1680" width="645" height="26" fill="#161616" rx="13" />
<path d="M2233 1686.500 L2224.500 1693 L2233 1699.500z" fill="#9d9d9d" stroke="#9d9d9d" stroke-width="1" stroke-linejoin="round"/>
<rect x="2241.5" y="1687" width="560.5" height="12.2" fill="#9d9d9d" rx="6" />
<path d="M2842 1686.500 L2850.500 1693 L2842 1699.500z" fill="#9d9d9d" stroke="#9d9d9d" stroke-width="1" stroke-linejoin="round"/>
<rect x="11" y="1718.3" width="2880" height="32.7" fill="#141414" />
<line x1="11" y1="1718.3" x2="2891" y2="1718.3" stroke="#2e2e2e" stroke-width="1" />
<text x="27" y="1741.3" font-size="16.5" fill="#f0f0f0" font-family="'Liberation Sans', sans-serif" textLength="42" lengthAdjust="spacingAndGlyphs" >Ready</text>
<rect x="100" y="1727" width="20" height="16" fill="none" stroke="#e0e0e0" stroke-width="1.4" />
<line x1="100" y1="1730.5" x2="120" y2="1730.5" stroke="#e0e0e0" stroke-width="1.2" />
<line x1="103" y1="1735" x2="109" y2="1735" stroke="#e0e0e0" stroke-width="1.2" />
<line x1="103" y1="1739" x2="108" y2="1739" stroke="#e0e0e0" stroke-width="1.2" />
<circle cx="114.500" cy="1739" r="5" fill="#141414" stroke="#e0e0e0" stroke-width="1.400"/><circle cx="114.500" cy="1739" r="2" fill="#e0e0e0"/>
<circle cx="155" cy="1728.500" r="2.400" fill="none" stroke="#e0e0e0" stroke-width="1.300"/>
<path d="M147 1731.500 c5 2 11 2 16 0 M155 1733 v6 M155 1739 l-5 8 M155 1739 l3 4" fill="none" stroke="#e0e0e0" stroke-width="1.5" stroke-linecap="round"/>
<path d="M158.500 1739.500 l8 8 M166.500 1739.500 l-8 8" fill="none" stroke="#e0e0e0" stroke-width="1.5" stroke-linecap="round"/>
<text x="173" y="1741.3" font-size="15.5" fill="#fff" font-family="'Liberation Sans', sans-serif" font-weight="bold" textLength="188" lengthAdjust="spacingAndGlyphs" >Accessibility: Investigate</text>
<rect x="2445" y="1719" width="60" height="32" fill="#262626" />
<rect x="2465" y="1725.5" width="19" height="17.5" fill="none" stroke="#f0f0f0" stroke-width="2" />
<line x1="2471.3" y1="1725.5" x2="2471.3" y2="1743" stroke="#f0f0f0" stroke-width="1.7" />
<line x1="2477.7" y1="1725.5" x2="2477.7" y2="1743" stroke="#f0f0f0" stroke-width="1.7" />
<line x1="2465" y1="1731.3" x2="2484" y2="1731.3" stroke="#f0f0f0" stroke-width="1.7" />
<line x1="2465" y1="1737.2" x2="2484" y2="1737.2" stroke="#f0f0f0" stroke-width="1.7" />
<rect x="2525" y="1725.5" width="20" height="17.5" fill="none" stroke="#f0f0f0" stroke-width="2" />
<rect x="2530" y="1729.3" width="10" height="10" fill="none" stroke="#f0f0f0" stroke-width="1.6" />
<line x1="2532.5" y1="1732.7" x2="2537.5" y2="1732.7" stroke="#f0f0f0" stroke-width="1.2" />
<line x1="2532.5" y1="1735.8" x2="2537.5" y2="1735.8" stroke="#f0f0f0" stroke-width="1.2" />
<rect x="2585" y="1725.5" width="20" height="17.5" fill="none" stroke="#f0f0f0" stroke-width="2" />
<path d="M2592 1725.500 V1736.200 M2598.500 1725.500 V1736.200 H2585" fill="none" stroke="#f0f0f0" stroke-width="1.8" />
<line x1="2633" y1="1735" x2="2644" y2="1735" stroke="#c8c8c8" stroke-width="1.4" />
<line x1="2653" y1="1735" x2="2801" y2="1735" stroke="#bdbdbd" stroke-width="2" />
<rect x="2726.3" y="1725.8" width="7.7" height="17" fill="#c2c2c2" rx="1" />
<path d="M2809.500 1735 h11.500 M2815.200 1729.300 v11.500" fill="none" stroke="#c8c8c8" stroke-width="1.4" />
<text x="2840" y="1741.3" font-size="16.5" fill="#f0f0f0" font-family="'Liberation Sans', sans-serif" textLength="39" lengthAdjust="spacingAndGlyphs" >110%</text>
</svg>
</body></html>
